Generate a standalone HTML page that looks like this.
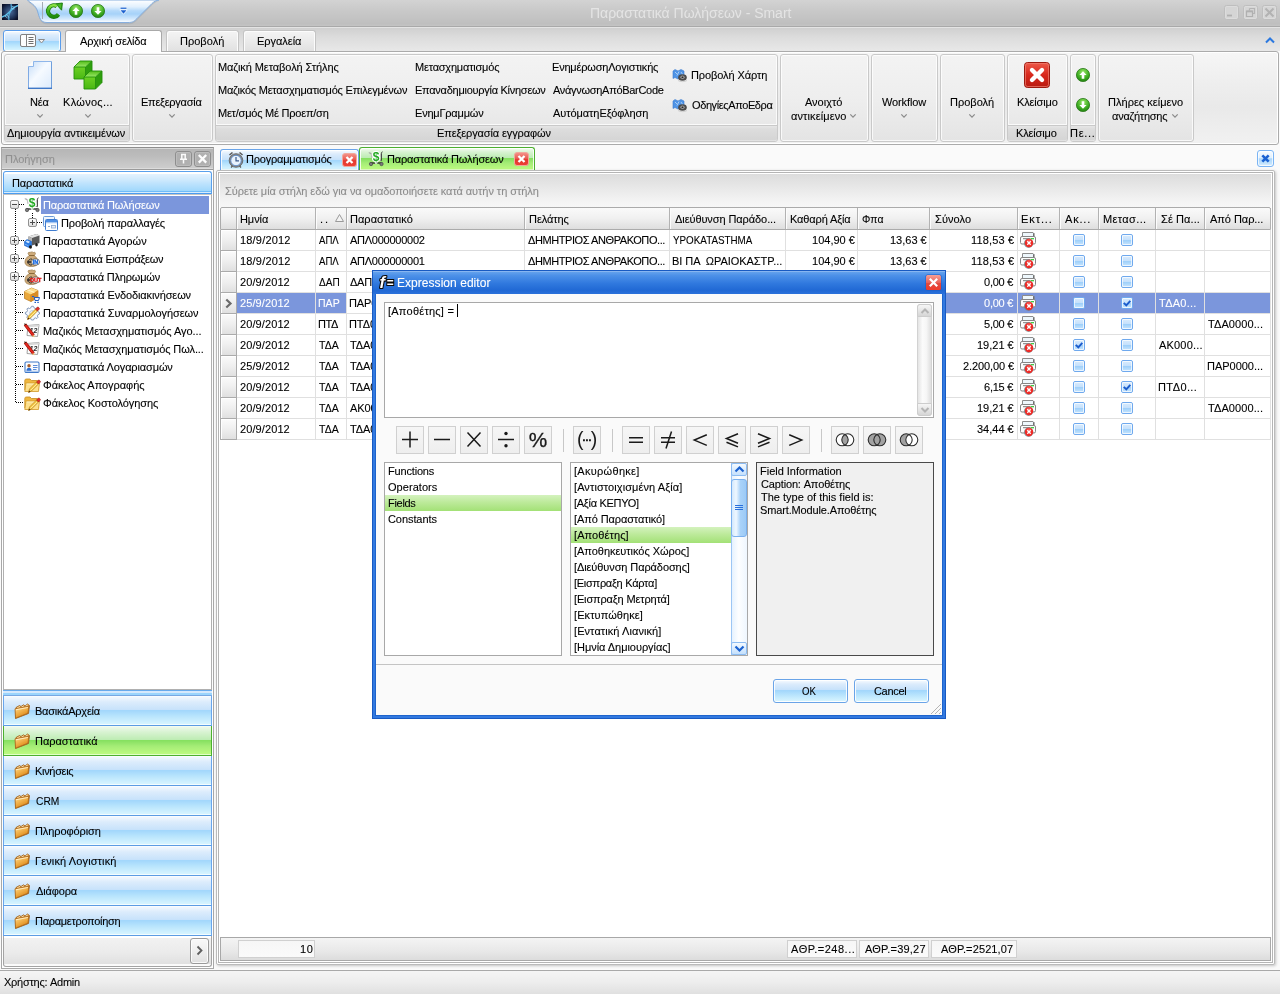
<!DOCTYPE html>
<html lang="el"><head><meta charset="utf-8"><title>Παραστατικά Πωλήσεων - Smart</title>
<style>
html,body{margin:0;padding:0}
body{width:1280px;height:994px;position:relative;overflow:hidden;background:#fafafa;font:11px "Liberation Sans",sans-serif;color:#000}
div,svg{position:absolute;box-sizing:border-box}
svg{overflow:visible}
.t{white-space:nowrap;line-height:13px;height:13px;-webkit-text-stroke:.1px}
</style></head>
<body>
<div style="left:0;top:0;width:1280px;height:994px;will-change:transform">
<div style="left:0px;top:0px;width:1280px;height:26px;background:linear-gradient(#d3d3d3,#c9c9c9 40%,#bfbfbf 92%,#c4c4c4)"></div>
<div style="left:0px;top:26px;width:1280px;height:1px;background:#a9a9a9"></div>
<div style="left:0px;top:27px;width:1280px;height:1px;background:#e4e4e4"></div>
<svg style="left:2px;top:4px;" width="16" height="16" viewBox="0 0 16 16"><defs><radialGradient id="ai" cx=".5" cy=".5" r=".6"><stop offset="0" stop-color="#4a6c9c"/><stop offset=".6" stop-color="#22365c"/><stop offset="1" stop-color="#0a1028"/></radialGradient></defs>
<rect width="16" height="16" fill="url(#ai)"/>
<path d="M0 13 C4 12 6 9.5 8 7.5 S12 2.5 16 1.5" stroke="#5cc0ea" stroke-width="1.5" fill="none"/>
<path d="M9 0 C10 3 9.5 5 8.5 7 S6 12 7 16" stroke="#58b4e0" stroke-width="1.3" fill="none" opacity=".9"/>
<path d="M10 2.5l3 1M9.5 4.5l3 .5M3 12l2.5 2M4.5 10.5l2.5 3" stroke="#8fd4f4" stroke-width=".9" opacity=".9"/></svg>
<svg style="left:26px;top:0px;" width="136" height="26" viewBox="0 0 136 26"><defs><linearGradient id="qg" x1="0" y1="0" x2="0" y2="1">
<stop offset="0" stop-color="#ffffff"/><stop offset=".3" stop-color="#e2f0fd"/><stop offset=".48" stop-color="#b4d9fa"/><stop offset=".62" stop-color="#a6d2f9"/><stop offset=".85" stop-color="#d4e9fd"/><stop offset="1" stop-color="#ffffff"/></linearGradient></defs>
<path d="M1.5 0 C4 3 9.5 4.5 11.5 11 C13.5 18 14.5 23 21 23 L102 23 C107 23 108.5 21.5 111 19 L126 4 C128 2 130 .5 133 0 Z" fill="#9aa4b0" opacity=".45" transform="translate(0 1.2)"/>
<path d="M1.5 0 C4 3 9.5 4.5 11.5 11 C13.5 18 14.5 22.5 21 22.5 L102 22.5 C107 22.5 108.5 21 111 18.5 L126 3.5 C128 1.5 130 .5 133 0 Z" fill="url(#qg)" stroke="#86aede" stroke-width="1"/>
<path d="M16.5 2 V19" stroke="#a4aab4" stroke-width="1"/></svg>
<svg style="left:45px;top:2px;" width="18" height="18" viewBox="0 0 18 18"><defs><linearGradient id="gr1" x1="0" y1="0" x2="0" y2="1"><stop offset="0" stop-color="#8ae244"/><stop offset=".5" stop-color="#3cae1c"/><stop offset="1" stop-color="#1e8a0e"/></linearGradient></defs>
<path d="M13.4 12.4 A5.7 5.7 0 1 1 11.8 4.2" fill="none" stroke="#1a7a0c" stroke-width="4.3"/>
<path d="M10.8 1.8 L17.4 1 L16.6 8.2 Z" fill="#2c9c14" stroke="#1a7a0c" stroke-width=".9" stroke-linejoin="round"/>
<path d="M13.4 12.4 A5.7 5.7 0 1 1 11.8 4.2" fill="none" stroke="url(#gr1)" stroke-width="2.7"/>
<path d="M12.3 2.5 L16.4 2 L15.9 6.5 Z" fill="#48b824"/></svg>
<svg style="left:69px;top:4px;" width="14" height="14" viewBox="0 0 14 14"><defs><radialGradient id="c69_4" cx=".5" cy=".3" r=".8"><stop offset="0" stop-color="#9be86a"/><stop offset=".55" stop-color="#3fae22"/><stop offset="1" stop-color="#17700c"/></radialGradient></defs>
<circle cx="7" cy="7" r="6.6" fill="url(#c69_4)" stroke="#2a7a18" stroke-width=".8"/>
<path d="M7 3.2 L10.6 7 H8.3 V10.8 H5.7 V7 H3.4 Z" fill="#fff"/></svg>
<svg style="left:91px;top:4px;" width="14" height="14" viewBox="0 0 14 14"><defs><radialGradient id="c91_4" cx=".5" cy=".3" r=".8"><stop offset="0" stop-color="#9be86a"/><stop offset=".55" stop-color="#3fae22"/><stop offset="1" stop-color="#17700c"/></radialGradient></defs>
<circle cx="7" cy="7" r="6.6" fill="url(#c91_4)" stroke="#2a7a18" stroke-width=".8"/>
<path d="M7 10.8 L10.6 7 H8.3 V3.2 H5.7 V7 H3.4 Z" fill="#fff"/></svg>
<svg style="left:120px;top:7px;" width="7" height="8" viewBox="0 0 7 8"><path d="M.3 1.2h6.4" stroke="#fff" stroke-width="2.6"/><path d="M.5 3.3h6l-3 3.4z" fill="#1c62d0" stroke="#fff" stroke-width="1.2" paint-order="stroke"/><path d="M.5 1.2h6" stroke="#1c62d0" stroke-width="1.3"/></svg>
<div class="t" style="left:590px;top:5px;letter-spacing:-0.019px;font-size:14px;line-height:17px;height:17px;color:#e4e4e4;-webkit-text-stroke:0;">Παραστατικά Πωλήσεων - Smart</div>
<svg style="left:1224px;top:5px;" width="15" height="15" viewBox="0 0 15 15"><rect x=".5" y=".5" width="14" height="14" rx="2" fill="#d5d5d5" stroke="#bebebe"/><rect x="1.5" y="1.5" width="12" height="12" rx="1.5" fill="none" stroke="#dcdcdc"/><path d="M3 10.5h5" stroke="#b0b0b0" stroke-width="1.8"/></svg>
<svg style="left:1243px;top:5px;" width="15" height="15" viewBox="0 0 15 15"><rect x=".5" y=".5" width="14" height="14" rx="2" fill="#d5d5d5" stroke="#bebebe"/><rect x="1.5" y="1.5" width="12" height="12" rx="1.5" fill="none" stroke="#dcdcdc"/><path d="M6.5 3.5h5v5h-2M6.5 3.5v2" stroke="#b4b4b4" stroke-width="1.2" fill="none"/><path d="M3.5 6h6v5.5h-6z" stroke="#b0b0b0" stroke-width="1.2" fill="none"/><path d="M3.5 6.5h6" stroke="#b0b0b0" stroke-width="1.6"/></svg>
<svg style="left:1262px;top:5px;" width="15" height="15" viewBox="0 0 15 15"><rect x=".5" y=".5" width="14" height="14" rx="2" fill="#d5d5d5" stroke="#bebebe"/><rect x="1.5" y="1.5" width="12" height="12" rx="1.5" fill="none" stroke="#dcdcdc"/><path d="M3.5 3.5l8 8M11.5 3.5l-8 8" stroke="#b2b2b2" stroke-width="2"/></svg>
<div style="left:0px;top:28px;width:1280px;height:23px;background:linear-gradient(#d0d0d0,#dcdcdc 40%,#e8e8e8)"></div>
<div style="left:3px;top:30px;width:58px;height:22px;border:1px solid #5a9cea;border-radius:3px;box-shadow:inset 0 0 0 1px rgba(255,255,255,.85);background:linear-gradient(#ffffff 0,#f2f8fe 1px,#dcecfc 4px,#c9e3fb 9px,#c6e1fb 10px,#a2d6fc 10px,#a4d8fc 11px,#b8e4fd 14px,#d6f4ff 19px,#f2fdff 19px)"></div>
<svg style="left:20px;top:34px;" width="26" height="14" viewBox="0 0 26 14"><rect x=".5" y=".5" width="15" height="12" rx="1.5" fill="#fdfdfd" stroke="#808080"/>
<path d="M6.5 1v11" stroke="#808080"/><path d="M8.5 3.5h5M8.5 5.5h5M8.5 7.5h5M8.5 9.5h5" stroke="#707070" stroke-width="1"/>
<path d="M18.5 5.5h6l-3 3.5z" fill="#f4f4f4" stroke="#8c8c8c" stroke-width="1"/></svg>
<div style="left:65px;top:30px;width:97px;height:23px;border:1px solid #a9a9a9;border-bottom:none;border-radius:3px 3px 0 0;background:#fff"></div>
<div class="t" style="left:80px;top:35px;letter-spacing:-0.167px;">Αρχική σελίδα</div>
<div style="left:166px;top:30px;width:73px;height:21px;border:1px solid #c4c4c4;border-bottom:none;border-radius:3px 3px 0 0;background:linear-gradient(#f4f4f4,#ebebeb 50%,#e1e1e1);box-shadow:inset 1px 1px 0 #fcfcfc,inset -1px 0 0 #fcfcfc"></div>
<div class="t" style="left:180px;top:35px;letter-spacing:0.017px;">Προβολή</div>
<div style="left:243px;top:30px;width:73px;height:21px;border:1px solid #c4c4c4;border-bottom:none;border-radius:3px 3px 0 0;background:linear-gradient(#f4f4f4,#ebebeb 50%,#e1e1e1);box-shadow:inset 1px 1px 0 #fcfcfc,inset -1px 0 0 #fcfcfc"></div>
<div class="t" style="left:257px;top:35px;letter-spacing:-0.028px;">Εργαλεία</div>
<svg style="left:1264px;top:36px;" width="12" height="8" viewBox="0 0 12 8"><path d="M2 6.5l4-4 4 4" stroke="#2a78e0" stroke-width="2" fill="none"/></svg>
<div style="left:1px;top:51px;width:1278px;height:94px;background:linear-gradient(#f6f6f6,#eeeeee 35%,#e9e9e9 60%,#f1f1f1);border:1px solid #ababab;border-radius:3px;box-shadow:inset 0 0 0 1px #fff"></div>
<div style="left:66px;top:51px;width:95px;height:1px;background:#fff"></div>
<div style="left:4px;top:54px;width:126px;height:88px;background:linear-gradient(#f3f3f3,#eeeeee 50%,#e4e4e4);border:1px solid #c9c9c9;border-radius:3px;box-shadow:inset 0 0 0 1px rgba(255,255,255,.75)"></div>
<div style="left:5px;top:124px;width:124px;height:1px;background:#fafafa"></div>
<div style="left:5px;top:125px;width:124px;height:16px;background:linear-gradient(#e6e6e6,#dddddd 20%,#d5d5d5 93%,#e2e2e2 94%);border-top:1px solid #c9c9c9;border-radius:0 0 2px 2px"></div>
<div class="t" style="left:7px;top:127px;letter-spacing:-0.091px;">Δημιουργία αντικειμένων</div>
<svg style="left:28px;top:61px;" width="24" height="28" viewBox="0 0 24 28"><defs><linearGradient id="nd" x1="0" y1="0" x2="1" y2="1"><stop offset="0" stop-color="#c4dcf8"/><stop offset=".45" stop-color="#f6faff"/><stop offset="1" stop-color="#dcebfc"/></linearGradient></defs>
<path d="M5.5 .5H23.5V27.5H.5V5.5H5.5Z" fill="url(#nd)"/>
<path d="M5.5 .5H23.5" stroke="#8fb6ea" fill="none"/><path d="M.5 5.5V27" stroke="#7faae4" fill="none"/><path d="M23.5 .5V27" stroke="#6f9fdc" fill="none"/><path d="M0 27.3H24" stroke="#3f78c8" stroke-width="1.4" fill="none"/>
<path d="M.5 5.5H5.5V.5" fill="none" stroke="#8fb6ea"/><path d="M0 5L5 0V5Z" fill="#fbfbfb"/></svg>
<svg style="left:74px;top:61px;" width="28" height="28" viewBox="0 0 28 28"><defs><linearGradient id="cf0" x1="0" y1="0" x2="0" y2="1"><stop offset="0" stop-color="#6cd024"/><stop offset="1" stop-color="#4ab814"/></linearGradient>
<linearGradient id="ct0" x1="0" y1="0" x2="0" y2="1"><stop offset="0" stop-color="#52bc18"/><stop offset="1" stop-color="#9ae868"/></linearGradient>
<linearGradient id="cf1" x1="0" y1="0" x2="0" y2="1"><stop offset="0" stop-color="#6cd024"/><stop offset="1" stop-color="#4ab814"/></linearGradient>
<linearGradient id="ct1" x1="0" y1="0" x2="0" y2="1"><stop offset="0" stop-color="#52bc18"/><stop offset="1" stop-color="#9ae868"/></linearGradient></defs><g transform="translate(0 0)"><path d="M0 6H11.5V18H0Z" fill="url(#cf0)"/><path d="M0 6L6 0H18L11.5 6Z" fill="url(#ct0)"/><path d="M11.5 6L18 0V11.5L11.5 18Z" fill="#2f9e0e"/>
<path d="M0 6H11.5V18H0ZM0 6L6 0H18L11.5 6M18 0V11.5L11.5 18" fill="none" stroke="#23900a" stroke-width=".9"/></g><g transform="translate(10 10)"><path d="M0 6H11.5V18H0Z" fill="url(#cf1)"/><path d="M0 6L6 0H18L11.5 6Z" fill="url(#ct1)"/><path d="M11.5 6L18 0V11.5L11.5 18Z" fill="#2f9e0e"/>
<path d="M0 6H11.5V18H0ZM0 6L6 0H18L11.5 6M18 0V11.5L11.5 18" fill="none" stroke="#23900a" stroke-width=".9"/></g></svg>
<div class="t" style="left:30px;top:96px;letter-spacing:-0.15px;">Νέα</div>
<svg style="left:35.5px;top:112.5px;" width="8" height="6" viewBox="0 0 8 6"><path d="M1.3 1.3l2.7 2.9 2.7-2.9" stroke="#8a8a8a" stroke-width="1.2" fill="none"/></svg>
<div class="t" style="left:63px;top:96px;letter-spacing:0.289px;">Κλώνος...</div>
<svg style="left:83.5px;top:112.5px;" width="8" height="6" viewBox="0 0 8 6"><path d="M1.3 1.3l2.7 2.9 2.7-2.9" stroke="#8a8a8a" stroke-width="1.2" fill="none"/></svg>
<div style="left:132px;top:54px;width:81px;height:88px;background:linear-gradient(#f3f3f3,#eeeeee 50%,#e4e4e4);border:1px solid #c9c9c9;border-radius:3px;box-shadow:inset 0 0 0 1px rgba(255,255,255,.75)"></div>
<div class="t" style="left:141px;top:96px;letter-spacing:-0.26px;">Επεξεργασία</div>
<svg style="left:167.5px;top:112.5px;" width="8" height="6" viewBox="0 0 8 6"><path d="M1.3 1.3l2.7 2.9 2.7-2.9" stroke="#8a8a8a" stroke-width="1.2" fill="none"/></svg>
<div style="left:215px;top:54px;width:563px;height:88px;background:linear-gradient(#f3f3f3,#eeeeee 50%,#e4e4e4);border:1px solid #c9c9c9;border-radius:3px;box-shadow:inset 0 0 0 1px rgba(255,255,255,.75)"></div>
<div style="left:216px;top:124px;width:561px;height:1px;background:#fafafa"></div>
<div style="left:216px;top:125px;width:561px;height:16px;background:linear-gradient(#e6e6e6,#dddddd 20%,#d5d5d5 93%,#e2e2e2 94%);border-top:1px solid #c9c9c9;border-radius:0 0 2px 2px"></div>
<div class="t" style="left:437px;top:127px;letter-spacing:-0.115px;">Επεξεργασία εγγραφών</div>
<div class="t" style="left:218px;top:61px;letter-spacing:-0.077px;">Μαζική Μεταβολή Στήλης</div>
<div class="t" style="left:218px;top:84px;letter-spacing:-0.221px;">Μαζικός Μετασχηματισμός Επιλεγμένων</div>
<div class="t" style="left:218px;top:107px;letter-spacing:-0.221px;">Μετ/σμός Μέ Προεπ/ση</div>
<div class="t" style="left:415px;top:61px;letter-spacing:-0.206px;">Μετασχηματισμός</div>
<div class="t" style="left:415px;top:84px;letter-spacing:-0.265px;">Επαναδημιουργία Κίνησεων</div>
<div class="t" style="left:415px;top:107px;letter-spacing:-0.21px;">ΕνημΓραμμών</div>
<div class="t" style="left:552px;top:61px;letter-spacing:-0.194px;">ΕνημέρωσηΛογιστικής</div>
<div class="t" style="left:553px;top:84px;letter-spacing:-0.299px;">ΑνάγνωσηΑπόBarCode</div>
<div class="t" style="left:553px;top:107px;letter-spacing:-0.074px;">ΑυτόματηΕξόφληση</div>
<svg style="left:672px;top:68px;" width="16" height="14" viewBox="0 0 16 14"><path d="M1 3l2-1.5 3 1.5 3-1.5 3 1.5v8l-3-1.5-3 1.5-3-1.5-2 1z" fill="#4f94e6" stroke="#3a7bd0" stroke-width=".6"/>
<path d="M3 4l2 2M7 3.5l-2 4M9 4l2 3" stroke="#bcd8f8" stroke-width=".8"/>
<ellipse cx="10.5" cy="9.5" rx="4.3" ry="3.3" fill="#4a4a4a"/><ellipse cx="10.5" cy="9.3" rx="2.2" ry="1.7" fill="#9a9a9a"/><ellipse cx="10.5" cy="9.3" rx="1" ry=".8" fill="#1e1e1e"/>
<path d="M6 12.5c2 1.5 7 1.5 9 0" stroke="#c8c8c8" stroke-width=".8" fill="none"/></svg>
<div class="t" style="left:691px;top:69px;letter-spacing:-0.1px;">Προβολή Χάρτη</div>
<svg style="left:672px;top:98px;" width="16" height="14" viewBox="0 0 16 14"><path d="M1 3l2-1.5 3 1.5 3-1.5 3 1.5v8l-3-1.5-3 1.5-3-1.5-2 1z" fill="#4f94e6" stroke="#3a7bd0" stroke-width=".6"/>
<path d="M3 4l2 2M7 3.5l-2 4M9 4l2 3" stroke="#bcd8f8" stroke-width=".8"/>
<ellipse cx="10.5" cy="9.5" rx="4.3" ry="3.3" fill="#4a4a4a"/><ellipse cx="10.5" cy="9.3" rx="2.2" ry="1.7" fill="#9a9a9a"/><ellipse cx="10.5" cy="9.3" rx="1" ry=".8" fill="#1e1e1e"/>
<path d="M6 12.5c2 1.5 7 1.5 9 0" stroke="#c8c8c8" stroke-width=".8" fill="none"/></svg>
<div class="t" style="left:692px;top:99px;letter-spacing:-0.393px;">ΟδηγίεςΑποΕδρα</div>
<div style="left:780px;top:54px;width:89px;height:88px;background:linear-gradient(#f3f3f3,#eeeeee 50%,#e4e4e4);border:1px solid #c9c9c9;border-radius:3px;box-shadow:inset 0 0 0 1px rgba(255,255,255,.75)"></div>
<div class="t" style="left:805px;top:96px;letter-spacing:-0.017px;">Ανοιχτό</div>
<div class="t" style="left:791px;top:110px;letter-spacing:0.11px;">αντικείμενο</div>
<svg style="left:848.5px;top:112.5px;" width="8" height="6" viewBox="0 0 8 6"><path d="M1.3 1.3l2.7 2.9 2.7-2.9" stroke="#8a8a8a" stroke-width="1.2" fill="none"/></svg>
<div style="left:871px;top:54px;width:67px;height:88px;background:linear-gradient(#f3f3f3,#eeeeee 50%,#e4e4e4);border:1px solid #c9c9c9;border-radius:3px;box-shadow:inset 0 0 0 1px rgba(255,255,255,.75)"></div>
<div class="t" style="left:882px;top:96px;letter-spacing:-0.115px;">Workflow</div>
<svg style="left:899.5px;top:112.5px;" width="8" height="6" viewBox="0 0 8 6"><path d="M1.3 1.3l2.7 2.9 2.7-2.9" stroke="#8a8a8a" stroke-width="1.2" fill="none"/></svg>
<div style="left:940px;top:54px;width:65px;height:88px;background:linear-gradient(#f3f3f3,#eeeeee 50%,#e4e4e4);border:1px solid #c9c9c9;border-radius:3px;box-shadow:inset 0 0 0 1px rgba(255,255,255,.75)"></div>
<div class="t" style="left:950px;top:96px;">Προβολή</div>
<svg style="left:968px;top:112.5px;" width="8" height="6" viewBox="0 0 8 6"><path d="M1.3 1.3l2.7 2.9 2.7-2.9" stroke="#8a8a8a" stroke-width="1.2" fill="none"/></svg>
<div style="left:1007px;top:54px;width:61px;height:88px;background:linear-gradient(#f3f3f3,#eeeeee 50%,#e4e4e4);border:1px solid #c9c9c9;border-radius:3px;box-shadow:inset 0 0 0 1px rgba(255,255,255,.75)"></div>
<div style="left:1008px;top:124px;width:59px;height:1px;background:#fafafa"></div>
<div style="left:1008px;top:125px;width:59px;height:16px;background:linear-gradient(#e6e6e6,#dddddd 20%,#d5d5d5 93%,#e2e2e2 94%);border-top:1px solid #c9c9c9;border-radius:0 0 2px 2px"></div>
<div class="t" style="left:1016px;top:127px;letter-spacing:-0.143px;">Κλείσιμο</div>
<svg style="left:1024px;top:62px;" width="26" height="26" viewBox="0 0 26 26"><defs><linearGradient id="rx" x1="0" y1="0" x2="0" y2="1"><stop offset="0" stop-color="#ee5a4a"/><stop offset=".5" stop-color="#d8281c"/><stop offset="1" stop-color="#b81a10"/></linearGradient></defs>
<rect x=".5" y=".5" width="25" height="25" rx="3" fill="url(#rx)" stroke="#9c1a10" stroke-width="1"/><rect x="1.5" y="1.5" width="23" height="23" rx="2" fill="none" stroke="#f08070" stroke-width="1" opacity=".7"/>
<path d="M8 8l10 10M18 8l-10 10" stroke="#fff" stroke-width="4.4" stroke-linecap="round"/></svg>
<div class="t" style="left:1017px;top:96px;letter-spacing:-0.143px;">Κλείσιμο</div>
<div style="left:1070px;top:54px;width:26px;height:88px;background:linear-gradient(#f3f3f3,#eeeeee 50%,#e4e4e4);border:1px solid #c9c9c9;border-radius:3px;box-shadow:inset 0 0 0 1px rgba(255,255,255,.75)"></div>
<div style="left:1071px;top:124px;width:24px;height:1px;background:#fafafa"></div>
<div style="left:1071px;top:125px;width:24px;height:16px;background:linear-gradient(#e6e6e6,#dddddd 20%,#d5d5d5 93%,#e2e2e2 94%);border-top:1px solid #c9c9c9;border-radius:0 0 2px 2px"></div>
<div class="t" style="left:1070px;top:127px;letter-spacing:0.7px;">Πε...</div>
<svg style="left:1076px;top:68px;" width="14" height="14" viewBox="0 0 14 14"><defs><radialGradient id="d1076_68" cx=".5" cy=".3" r=".8"><stop offset="0" stop-color="#9be86a"/><stop offset=".55" stop-color="#3fae22"/><stop offset="1" stop-color="#17700c"/></radialGradient></defs>
<circle cx="7" cy="7" r="6.6" fill="url(#d1076_68)" stroke="#2a7a18" stroke-width=".8"/>
<path d="M7 3.2 L10.6 7 H8.3 V10.8 H5.7 V7 H3.4 Z" fill="#fff"/></svg>
<svg style="left:1076px;top:98px;" width="14" height="14" viewBox="0 0 14 14"><defs><radialGradient id="d1076_98" cx=".5" cy=".3" r=".8"><stop offset="0" stop-color="#9be86a"/><stop offset=".55" stop-color="#3fae22"/><stop offset="1" stop-color="#17700c"/></radialGradient></defs>
<circle cx="7" cy="7" r="6.6" fill="url(#d1076_98)" stroke="#2a7a18" stroke-width=".8"/>
<path d="M7 10.8 L10.6 7 H8.3 V3.2 H5.7 V7 H3.4 Z" fill="#fff"/></svg>
<div style="left:1098px;top:54px;width:96px;height:88px;background:linear-gradient(#f3f3f3,#eeeeee 50%,#e4e4e4);border:1px solid #c9c9c9;border-radius:3px;box-shadow:inset 0 0 0 1px rgba(255,255,255,.75)"></div>
<div class="t" style="left:1108px;top:96px;letter-spacing:0.024px;">Πλήρες κείμενο</div>
<div class="t" style="left:1112px;top:110px;letter-spacing:-0.234px;">αναζήτησης</div>
<svg style="left:1170.5px;top:112.5px;" width="8" height="6" viewBox="0 0 8 6"><path d="M1.3 1.3l2.7 2.9 2.7-2.9" stroke="#8a8a8a" stroke-width="1.2" fill="none"/></svg>
<div style="left:1px;top:147px;width:213px;height:822px;background:#fff;border:1px solid #a8a8a8;border-top-color:#8e8e8e"></div>
<div style="left:2px;top:148px;width:211px;height:22px;background:linear-gradient(#d8d8d8 0 1px,#b6b6b6 1px,#bcbcbc 8px,#cdcdcd 20px,#dcdcdc 20px);border-bottom:1px solid #9a9a9a"></div>
<div class="t" style="left:5px;top:153px;letter-spacing:-0.042px;color:#919191;">Πλοήγηση</div>
<svg style="left:175px;top:151px;" width="17" height="16" viewBox="0 0 17 16"><rect x=".5" y=".5" width="16" height="15" rx="2.5" fill="#b0b0b0" stroke="#8e8e8e"/><rect x="1.5" y="1.5" width="14" height="13" rx="1.5" fill="none" stroke="#bcbcbc"/><g transform="translate(.5 0)"><path d="M5.5 3.5h5M6.3 3.5v5M9.7 3.5v5M4.5 8.3h7M8 8.5v4" stroke="#fafafa" stroke-width="1.5" fill="none"/></g></svg>
<svg style="left:194px;top:151px;" width="17" height="16" viewBox="0 0 17 16"><rect x=".5" y=".5" width="16" height="15" rx="2.5" fill="#b0b0b0" stroke="#8e8e8e"/><rect x="1.5" y="1.5" width="14" height="13" rx="1.5" fill="none" stroke="#bcbcbc"/><g transform="translate(.5 0)"><path d="M4.3 4l7.4 7.6M11.7 4l-7.4 7.6" stroke="#fcfcfc" stroke-width="2.3"/></g></svg>
<div style="left:3px;top:171px;width:209px;height:23px;border:1px solid #5aa0ec;border-bottom-color:#4a9cf0;border-radius:3px 3px 0 0;background:linear-gradient(#fff 0 2px,#e4f2fe 2px,#d2ebfd 7px,#bce2fd 12px,#a0d8fc 19px,#70bcf8 19px 20px,#d8ecfc 20px)"></div>
<div class="t" style="left:12px;top:177px;letter-spacing:-0.14px;">Παραστατικά</div>
<div style="left:3px;top:194px;width:209px;height:496px;background:#fff;border:1px solid #b0b0b0;border-top-color:#c4c4c4"></div>
<div style="left:15px;top:209px;width:1px;height:194px;background:repeating-linear-gradient(#000 0 1px,transparent 1px 2px)"></div>
<div style="left:32px;top:213px;width:1px;height:5px;background:repeating-linear-gradient(#000 0 1px,transparent 1px 2px)"></div>
<div style="left:41px;top:196px;width:168px;height:18px;background:#7b96dc"></div>
<div style="left:19px;top:204px;width:5px;height:1px;background:repeating-linear-gradient(90deg,#000 0 1px,transparent 1px 2px)"></div>
<svg style="left:10px;top:200px;" width="9" height="9" viewBox="0 0 9 9"><defs><linearGradient id="pb" x1="0" y1="0" x2="0" y2="1"><stop offset="0" stop-color="#ffffff"/><stop offset="1" stop-color="#dcdcdc"/></linearGradient></defs><rect x=".5" y=".5" width="8" height="8" rx="1.5" fill="url(#pb)" stroke="#919191"/><g stroke="#4c4c4c" stroke-width="1"><path d="M2 4.5h5"/></g></svg>
<svg style="left:24px;top:197px;" width="16" height="16" viewBox="0 0 16 16"><path d="M.8 1.8L3 2.3 5 9.5H13" fill="none" stroke="#9a9a9a" stroke-width="1"/><path d="M3.2 3.2H12.5L12 9H5Z" fill="#ececec" stroke="#c4c4c4" stroke-width=".6"/>
<path d="M14.5 .8C13.5 1 13.4 2 13.4 3V9.8" fill="none" stroke="#3a3a3a" stroke-width="1"/>
<path d="M2.5 12H14" stroke="#1e1e1e" stroke-width="1.3"/><circle cx="3" cy="13" r="1.7" fill="#7a7a7a" stroke="#3a3a3a" stroke-width=".6"/><circle cx="13.5" cy="13" r="1.7" fill="#7a7a7a" stroke="#3a3a3a" stroke-width=".6"/>
<text x="8.2" y="10" font-family="Liberation Sans,sans-serif" font-weight="bold" font-size="12" text-anchor="middle" fill="#22aa22" stroke="#fff" stroke-width="2" stroke-linejoin="round" paint-order="stroke">$</text></svg>
<div class="t" style="left:43px;top:199px;letter-spacing:-0.148px;color:#fff;">Παραστατικά Πωλήσεων</div>
<div style="left:37px;top:222px;width:5px;height:1px;background:repeating-linear-gradient(90deg,#000 0 1px,transparent 1px 2px)"></div>
<svg style="left:28px;top:218px;" width="9" height="9" viewBox="0 0 9 9"><defs><linearGradient id="pb" x1="0" y1="0" x2="0" y2="1"><stop offset="0" stop-color="#ffffff"/><stop offset="1" stop-color="#dcdcdc"/></linearGradient></defs><rect x=".5" y=".5" width="8" height="8" rx="1.5" fill="url(#pb)" stroke="#919191"/><g stroke="#4c4c4c" stroke-width="1"><path d="M2 4.5h5"/><path d="M4.5 2v5"/></g></svg>
<svg style="left:42px;top:215px;" width="16" height="16" viewBox="0 0 16 16"><rect x="1.5" y="1.5" width="11" height="10" rx="1" fill="#f0f6fe" stroke="#6a9ad8"/>
<rect x="3.5" y="4.5" width="12" height="11" rx="1" fill="#fdfeff" stroke="#3f7cd0"/><rect x="4" y="5" width="11" height="2.5" fill="#4f8fe4"/><path d="M4 7.8H15" stroke="#a8c8f0" stroke-width=".8"/>
<path d="M6 11.5h2" stroke="#8aa8d0" stroke-width="1"/><rect x="9.5" y="10.5" width="4" height="2.5" fill="#e4ecf8" stroke="#8aa8d0" stroke-width=".8"/></svg>
<div class="t" style="left:61px;top:217px;letter-spacing:-0.141px;">Προβολή παραλλαγές</div>
<div style="left:19px;top:240px;width:5px;height:1px;background:repeating-linear-gradient(90deg,#000 0 1px,transparent 1px 2px)"></div>
<svg style="left:10px;top:236px;" width="9" height="9" viewBox="0 0 9 9"><defs><linearGradient id="pb" x1="0" y1="0" x2="0" y2="1"><stop offset="0" stop-color="#ffffff"/><stop offset="1" stop-color="#dcdcdc"/></linearGradient></defs><rect x=".5" y=".5" width="8" height="8" rx="1.5" fill="url(#pb)" stroke="#919191"/><g stroke="#4c4c4c" stroke-width="1"><path d="M2 4.5h5"/><path d="M4.5 2v5"/></g></svg>
<svg style="left:24px;top:233px;" width="16" height="16" viewBox="0 0 16 16"><path d="M4.5 3.5L12.5 1 15.5 2.5V10L8 12.5 4.5 10.5Z" fill="#5a5a5a"/><path d="M4.5 3.5L12.5 1 15.5 2.5 8 5Z" fill="#e4e4e4"/><path d="M4.5 3.5L8 5V12.5L4.5 10.5Z" fill="#b8b8b8"/>
<path d="M.5 8.5L3 6.5 7.5 8.5V13L5 14.5 .5 12.5Z" fill="#2a7ce4" stroke="#1a5cc0" stroke-width=".6"/><path d="M1.5 8.8L3.2 7.5 6 8.8 4.5 10.2Z" fill="#d4e8ff"/><path d="M.8 11L4.5 12.8" stroke="#8cc0ff" stroke-width=".8"/>
<ellipse cx="6.5" cy="14" rx="1.5" ry="1.8" fill="#1a1a1a"/><ellipse cx="12.5" cy="11.8" rx="1.3" ry="1.7" fill="#1a1a1a"/></svg>
<div class="t" style="left:43px;top:235px;letter-spacing:-0.041px;">Παραστατικά Αγορών</div>
<div style="left:19px;top:258px;width:5px;height:1px;background:repeating-linear-gradient(90deg,#000 0 1px,transparent 1px 2px)"></div>
<svg style="left:10px;top:254px;" width="9" height="9" viewBox="0 0 9 9"><defs><linearGradient id="pb" x1="0" y1="0" x2="0" y2="1"><stop offset="0" stop-color="#ffffff"/><stop offset="1" stop-color="#dcdcdc"/></linearGradient></defs><rect x=".5" y=".5" width="8" height="8" rx="1.5" fill="url(#pb)" stroke="#919191"/><g stroke="#4c4c4c" stroke-width="1"><path d="M2 4.5h5"/><path d="M4.5 2v5"/></g></svg>
<svg style="left:24px;top:251px;" width="16" height="16" viewBox="0 0 16 16"><path d="M4.5 3.5C3.5 2 4.5 .8 6 1.5 7 .8 8.5 .8 9.5 1.5 11 .8 12 2 11 3.5L10 4.5C12.5 6 14 8.5 14 11 14 14 11.5 15.5 7.5 15.5S1 14 1 11C1 8.5 2.5 6 5.5 4.5Z" fill="#cdaa7a" stroke="#9a7848" stroke-width=".7"/>
<path d="M5 4.5H10.5" stroke="#8a6838" stroke-width="1"/><path d="M3.5 9.5C4.5 8 6 7.5 7 8" stroke="#e8d4b0" stroke-width="1" fill="none"/>
<path d="M8 8.2A3 3 0 1 0 8 13.8M3.2 10.3H7M3.2 11.7H7" fill="none" stroke="#2a2a2a" stroke-width="1"/>
<rect x="7.5" y="8" width="8" height="6" rx="3" fill="#fff" stroke="#3a3a3a" stroke-width=".7"/>
<text x="11.5" y="13" font-family="Liberation Sans,sans-serif" font-weight="bold" font-size="5.5" text-anchor="middle" fill="#1a6ae0" stroke="#1a6ae0" stroke-width=".4">IN</text></svg>
<div class="t" style="left:43px;top:253px;letter-spacing:-0.286px;">Παραστατικά Εισπράξεων</div>
<div style="left:19px;top:276px;width:5px;height:1px;background:repeating-linear-gradient(90deg,#000 0 1px,transparent 1px 2px)"></div>
<svg style="left:10px;top:272px;" width="9" height="9" viewBox="0 0 9 9"><defs><linearGradient id="pb" x1="0" y1="0" x2="0" y2="1"><stop offset="0" stop-color="#ffffff"/><stop offset="1" stop-color="#dcdcdc"/></linearGradient></defs><rect x=".5" y=".5" width="8" height="8" rx="1.5" fill="url(#pb)" stroke="#919191"/><g stroke="#4c4c4c" stroke-width="1"><path d="M2 4.5h5"/><path d="M4.5 2v5"/></g></svg>
<svg style="left:24px;top:269px;" width="16" height="16" viewBox="0 0 16 16"><path d="M4.5 3.5C3.5 2 4.5 .8 6 1.5 7 .8 8.5 .8 9.5 1.5 11 .8 12 2 11 3.5L10 4.5C12.5 6 14 8.5 14 11 14 14 11.5 15.5 7.5 15.5S1 14 1 11C1 8.5 2.5 6 5.5 4.5Z" fill="#cdaa7a" stroke="#9a7848" stroke-width=".7"/>
<path d="M5 4.5H10.5" stroke="#8a6838" stroke-width="1"/><path d="M3.5 9.5C4.5 8 6 7.5 7 8" stroke="#e8d4b0" stroke-width="1" fill="none"/>
<path d="M8 8.2A3 3 0 1 0 8 13.8M3.2 10.3H7M3.2 11.7H7" fill="none" stroke="#2a2a2a" stroke-width="1"/>
<rect x="7.5" y="8" width="8" height="6" rx="3" fill="#fff" stroke="#3a3a3a" stroke-width=".7"/>
<text x="11.5" y="13" font-family="Liberation Sans,sans-serif" font-weight="bold" font-size="5.5" text-anchor="middle" fill="#e01818" stroke="#e01818" stroke-width=".4">OUT</text></svg>
<div class="t" style="left:43px;top:271px;letter-spacing:-0.178px;">Παραστατικά Πληρωμών</div>
<div style="left:16px;top:294px;width:8px;height:1px;background:repeating-linear-gradient(90deg,#000 0 1px,transparent 1px 2px)"></div>
<svg style="left:24px;top:287px;" width="16" height="16" viewBox="0 0 16 16"><path d="M.5 4.5L7.5 1 14 3.5V10.5L7 14.5 .5 11.5Z" fill="#eaa83c" stroke="#b47418" stroke-width=".7"/><path d="M.5 4.5L7.5 1 14 3.5 7 7.5Z" fill="#fbdc8c"/><path d="M7 7.5V14.5" stroke="#b47418" stroke-width=".7"/><path d="M7 7.5L14 3.5V10.5L7 14.5Z" fill="#d88c24"/>
<path d="M3.5 2.8L10.5 5.5" stroke="#fff4c8" stroke-width="1.2"/>
<path d="M8 9.5H10L11 13.5H14.5L15.5 10.5H10.3" fill="#eaf2ff" stroke="#1e5cc0" stroke-width="1"/><rect x="10.5" y="14.8" width="1.5" height="1.2" fill="#1e5cc0"/><rect x="13.3" y="14.8" width="1.5" height="1.2" fill="#1e5cc0"/></svg>
<div class="t" style="left:43px;top:289px;letter-spacing:-0.118px;">Παραστατικά Ενδοδιακινήσεων</div>
<div style="left:16px;top:312px;width:8px;height:1px;background:repeating-linear-gradient(90deg,#000 0 1px,transparent 1px 2px)"></div>
<svg style="left:24px;top:305px;" width="16" height="16" viewBox="0 0 16 16"><path d="M8 1.2l1.5.2.6 1.5 1.3.6 1.5-.6 1.1 1.1-.6 1.5.6 1.3 1.5.6v1.6l-1.5.6-.6 1.3.6 1.5-1.1 1.1-1.5-.6-1.3.6-.6 1.5H7.4l-.6-1.5-1.3-.6-1.5.6-1.1-1.1.6-1.5-.6-1.3-1.5-.6V7.4l1.5-.6.6-1.3-.6-1.5 1.1-1.1 1.5.6 1.3-.6.6-1.5Z" fill="#f6f9fd" stroke="#7890b4" stroke-width=".9" stroke-linejoin="round"/><circle cx="8" cy="8" r="2.3" fill="#fff" stroke="#9ab0cc" stroke-width=".7"/><g transform="translate(0 0)"><path d="M3.5 14.5L4.5 11 11.5 4 13.5 6 6.5 13Z" fill="#f8cc48" stroke="#b8821c" stroke-width=".7"/><path d="M5.5 12.5L12 6" stroke="#fff0b0" stroke-width=".8"/><path d="M11.5 4L13 2.5a1.2 1.2 0 0 1 1.7 0l.3 .3a1.2 1.2 0 0 1 0 1.7L13.5 6Z" fill="#e03028" stroke="#a01810" stroke-width=".6"/><path d="M3.5 14.5L4.1 12.4 5.6 13.9Z" fill="#4a2c10"/></g></svg>
<div class="t" style="left:43px;top:307px;letter-spacing:-0.092px;">Παραστατικά Συναρμολογήσεων</div>
<div style="left:16px;top:330px;width:8px;height:1px;background:repeating-linear-gradient(90deg,#000 0 1px,transparent 1px 2px)"></div>
<svg style="left:24px;top:323px;" width="16" height="16" viewBox="0 0 16 16"><path d="M4 2.5L15 1.5 13.5 13.5 3 12.5Z" fill="#fcfcfc" stroke="#8c8c8c" stroke-width=".8"/><path d="M4 2.5L15 1.5 14.7 3.5 3.8 4.3Z" fill="#d8d8d8"/>
<text x="9.5" y="9.5" font-family="Liberation Sans,sans-serif" font-style="italic" font-weight="bold" font-size="7" text-anchor="middle" fill="#2a2a2a">12</text>
<path d="M1 1.5L9.5 12.5" stroke="#a01008" stroke-width="3"/><path d="M1 1.5L9.5 12.5" stroke="#e42820" stroke-width="1.9"/><path d="M.2 .3L2.5 1.2 .9 2.5Z" fill="#3a1a10"/><path d="M9 11.8L11 14.3 8.3 13.2Z" fill="#f4c060"/></svg>
<div class="t" style="left:43px;top:325px;letter-spacing:-0.055px;">Μαζικός Μετασχηματισμός Αγο...</div>
<div style="left:16px;top:348px;width:8px;height:1px;background:repeating-linear-gradient(90deg,#000 0 1px,transparent 1px 2px)"></div>
<svg style="left:24px;top:341px;" width="16" height="16" viewBox="0 0 16 16"><path d="M4 2.5L15 1.5 13.5 13.5 3 12.5Z" fill="#fcfcfc" stroke="#8c8c8c" stroke-width=".8"/><path d="M4 2.5L15 1.5 14.7 3.5 3.8 4.3Z" fill="#d8d8d8"/>
<text x="9.5" y="9.5" font-family="Liberation Sans,sans-serif" font-style="italic" font-weight="bold" font-size="7" text-anchor="middle" fill="#2a2a2a">12</text>
<path d="M1 1.5L9.5 12.5" stroke="#a01008" stroke-width="3"/><path d="M1 1.5L9.5 12.5" stroke="#e42820" stroke-width="1.9"/><path d="M.2 .3L2.5 1.2 .9 2.5Z" fill="#3a1a10"/><path d="M9 11.8L11 14.3 8.3 13.2Z" fill="#f4c060"/></svg>
<div class="t" style="left:43px;top:343px;letter-spacing:-0.103px;">Μαζικός Μετασχηματισμός Πωλ...</div>
<div style="left:16px;top:366px;width:8px;height:1px;background:repeating-linear-gradient(90deg,#000 0 1px,transparent 1px 2px)"></div>
<svg style="left:24px;top:359px;" width="16" height="16" viewBox="0 0 16 16"><rect x="1" y="3" width="14" height="10.5" rx="1.2" fill="#fafcff" stroke="#3f78c8" stroke-width="1.1"/><path d="M1.5 12.3H14.5" stroke="#a8c4ec" stroke-width="1.2"/>
<circle cx="5" cy="6.8" r="1.7" fill="#a85c28"/><path d="M2.5 11.8C2.5 9.5 3.5 8.8 5 8.8S7.5 9.5 7.5 11.8Z" fill="#2a6cd0"/>
<path d="M9 6.5H13.5M9 8.5H13.5M9 10.5H12.5" stroke="#5a8cd8" stroke-width="1"/></svg>
<div class="t" style="left:43px;top:361px;letter-spacing:-0.136px;">Παραστατικά Λογαριασμών</div>
<div style="left:16px;top:384px;width:8px;height:1px;background:repeating-linear-gradient(90deg,#000 0 1px,transparent 1px 2px)"></div>
<svg style="left:24px;top:377px;" width="16" height="16" viewBox="0 0 16 16"><path d="M.8 3.5C.8 2.5 1.5 2 2.5 2H6L7.5 3.5H13C14 3.5 14.5 4 14.5 5V13H.8Z" fill="#f0b840" stroke="#c88a1c" stroke-width=".8"/>
<path d="M2 6H15.5L14.5 14.5H.8Z" fill="#fde08c" stroke="#d09828" stroke-width=".8"/><path d="M2.5 7H14.5" stroke="#fff4c8" stroke-width=".8"/><g transform="translate(1 1)"><path d="M3.5 14.5L4.5 11 11.5 4 13.5 6 6.5 13Z" fill="#f8cc48" stroke="#b8821c" stroke-width=".7"/><path d="M5.5 12.5L12 6" stroke="#fff0b0" stroke-width=".8"/><path d="M11.5 4L13 2.5a1.2 1.2 0 0 1 1.7 0l.3 .3a1.2 1.2 0 0 1 0 1.7L13.5 6Z" fill="#e03028" stroke="#a01810" stroke-width=".6"/><path d="M3.5 14.5L4.1 12.4 5.6 13.9Z" fill="#4a2c10"/></g></svg>
<div class="t" style="left:43px;top:379px;letter-spacing:-0.049px;">Φάκελος Απογραφής</div>
<div style="left:16px;top:402px;width:8px;height:1px;background:repeating-linear-gradient(90deg,#000 0 1px,transparent 1px 2px)"></div>
<svg style="left:24px;top:395px;" width="16" height="16" viewBox="0 0 16 16"><path d="M.8 3.5C.8 2.5 1.5 2 2.5 2H6L7.5 3.5H13C14 3.5 14.5 4 14.5 5V13H.8Z" fill="#f0b840" stroke="#c88a1c" stroke-width=".8"/>
<path d="M2 6H15.5L14.5 14.5H.8Z" fill="#fde08c" stroke="#d09828" stroke-width=".8"/><path d="M2.5 7H14.5" stroke="#fff4c8" stroke-width=".8"/><g transform="translate(1 1)"><path d="M3.5 14.5L4.5 11 11.5 4 13.5 6 6.5 13Z" fill="#f8cc48" stroke="#b8821c" stroke-width=".7"/><path d="M5.5 12.5L12 6" stroke="#fff0b0" stroke-width=".8"/><path d="M11.5 4L13 2.5a1.2 1.2 0 0 1 1.7 0l.3 .3a1.2 1.2 0 0 1 0 1.7L13.5 6Z" fill="#e03028" stroke="#a01810" stroke-width=".6"/><path d="M3.5 14.5L4.1 12.4 5.6 13.9Z" fill="#4a2c10"/></g></svg>
<div class="t" style="left:43px;top:397px;letter-spacing:-0.079px;">Φάκελος Κοστολόγησης</div>
<div style="left:3px;top:690px;width:209px;height:6px;background:linear-gradient(#68aaec 0 1px,#d6e9fc 1px 3px,#9ad5fd 3px 5px,#78a8e2 5px)"></div>
<div style="left:3px;top:696px;width:209px;height:30px;background:linear-gradient(#ffffff 0,#f2f8fe 1px,#dcecfc 6px,#c9e3fb 13px,#c6e1fb 14px,#a2d6fc 14px,#a4d8fc 15px,#b8e4fd 20px,#d6f4ff 28px,#f2fdff 28px);border:1px solid #5c9ce4;border-top:none;border-left-color:#6aa6ec;border-right-color:#6aa6ec"></div>
<svg style="left:14px;top:703px;" width="16" height="16" viewBox="0 0 16 16"><defs><linearGradient id="fo" x1="0" y1="0" x2=".6" y2="1"><stop offset="0" stop-color="#fdeebc"/><stop offset=".35" stop-color="#f6c060"/><stop offset=".75" stop-color="#e69a2c"/><stop offset="1" stop-color="#c47818"/></linearGradient></defs>
<path d="M2 4.5L5.5 2.5 7 3.5 9.5 1.8 11 3 13.5 1 15.5 2.5 14.5 10.5 1.5 15.5Z" fill="#d8943c" stroke="#9c5c18" stroke-width=".8" stroke-linejoin="round"/>
<path d="M3 5L6 3.5M7.5 4L10 2.8M11.5 3.3L13.8 2" stroke="#fbe4b0" stroke-width="1"/>
<path d="M1 5.8L14.8 3.2 14 10.2 1.5 15.2Z" fill="url(#fo)" stroke="#a8641a" stroke-width=".8" stroke-linejoin="round"/>
<path d="M2 6.8L13.8 4.5" stroke="#fff6d8" stroke-width=".9" opacity=".9"/></svg>
<div class="t" style="left:35px;top:705px;letter-spacing:-0.236px;">ΒασικάΑρχεία</div>
<div style="left:3px;top:726px;width:209px;height:30px;background:linear-gradient(#f8fff6 0,#eef9ea 1px,#d8f3d2 6px,#c0edb6 13px,#bcecb2 14px,#84e05e 14px,#88e162 15px,#a4ec76 20px,#bcfa80 28px,#e2ffc6 28px);border:1px solid #4cb030;border-top:none"></div>
<svg style="left:14px;top:733px;" width="16" height="16" viewBox="0 0 16 16"><defs><linearGradient id="fo" x1="0" y1="0" x2=".6" y2="1"><stop offset="0" stop-color="#fdeebc"/><stop offset=".35" stop-color="#f6c060"/><stop offset=".75" stop-color="#e69a2c"/><stop offset="1" stop-color="#c47818"/></linearGradient></defs>
<path d="M2 4.5L5.5 2.5 7 3.5 9.5 1.8 11 3 13.5 1 15.5 2.5 14.5 10.5 1.5 15.5Z" fill="#d8943c" stroke="#9c5c18" stroke-width=".8" stroke-linejoin="round"/>
<path d="M3 5L6 3.5M7.5 4L10 2.8M11.5 3.3L13.8 2" stroke="#fbe4b0" stroke-width="1"/>
<path d="M1 5.8L14.8 3.2 14 10.2 1.5 15.2Z" fill="url(#fo)" stroke="#a8641a" stroke-width=".8" stroke-linejoin="round"/>
<path d="M2 6.8L13.8 4.5" stroke="#fff6d8" stroke-width=".9" opacity=".9"/></svg>
<div class="t" style="left:35px;top:735px;letter-spacing:-0.02px;">Παραστατικά</div>
<div style="left:3px;top:756px;width:209px;height:30px;background:linear-gradient(#ffffff 0,#f2f8fe 1px,#dcecfc 6px,#c9e3fb 13px,#c6e1fb 14px,#a2d6fc 14px,#a4d8fc 15px,#b8e4fd 20px,#d6f4ff 28px,#f2fdff 28px);border:1px solid #5c9ce4;border-top:none;border-left-color:#6aa6ec;border-right-color:#6aa6ec"></div>
<svg style="left:14px;top:763px;" width="16" height="16" viewBox="0 0 16 16"><defs><linearGradient id="fo" x1="0" y1="0" x2=".6" y2="1"><stop offset="0" stop-color="#fdeebc"/><stop offset=".35" stop-color="#f6c060"/><stop offset=".75" stop-color="#e69a2c"/><stop offset="1" stop-color="#c47818"/></linearGradient></defs>
<path d="M2 4.5L5.5 2.5 7 3.5 9.5 1.8 11 3 13.5 1 15.5 2.5 14.5 10.5 1.5 15.5Z" fill="#d8943c" stroke="#9c5c18" stroke-width=".8" stroke-linejoin="round"/>
<path d="M3 5L6 3.5M7.5 4L10 2.8M11.5 3.3L13.8 2" stroke="#fbe4b0" stroke-width="1"/>
<path d="M1 5.8L14.8 3.2 14 10.2 1.5 15.2Z" fill="url(#fo)" stroke="#a8641a" stroke-width=".8" stroke-linejoin="round"/>
<path d="M2 6.8L13.8 4.5" stroke="#fff6d8" stroke-width=".9" opacity=".9"/></svg>
<div class="t" style="left:35px;top:765px;letter-spacing:-0.314px;">Κινήσεις</div>
<div style="left:3px;top:786px;width:209px;height:30px;background:linear-gradient(#ffffff 0,#f2f8fe 1px,#dcecfc 6px,#c9e3fb 13px,#c6e1fb 14px,#a2d6fc 14px,#a4d8fc 15px,#b8e4fd 20px,#d6f4ff 28px,#f2fdff 28px);border:1px solid #5c9ce4;border-top:none;border-left-color:#6aa6ec;border-right-color:#6aa6ec"></div>
<svg style="left:14px;top:793px;" width="16" height="16" viewBox="0 0 16 16"><defs><linearGradient id="fo" x1="0" y1="0" x2=".6" y2="1"><stop offset="0" stop-color="#fdeebc"/><stop offset=".35" stop-color="#f6c060"/><stop offset=".75" stop-color="#e69a2c"/><stop offset="1" stop-color="#c47818"/></linearGradient></defs>
<path d="M2 4.5L5.5 2.5 7 3.5 9.5 1.8 11 3 13.5 1 15.5 2.5 14.5 10.5 1.5 15.5Z" fill="#d8943c" stroke="#9c5c18" stroke-width=".8" stroke-linejoin="round"/>
<path d="M3 5L6 3.5M7.5 4L10 2.8M11.5 3.3L13.8 2" stroke="#fbe4b0" stroke-width="1"/>
<path d="M1 5.8L14.8 3.2 14 10.2 1.5 15.2Z" fill="url(#fo)" stroke="#a8641a" stroke-width=".8" stroke-linejoin="round"/>
<path d="M2 6.8L13.8 4.5" stroke="#fff6d8" stroke-width=".9" opacity=".9"/></svg>
<div class="t" style="left:36px;top:795px;transform:scaleX(0.9311);transform-origin:0 0;">CRM</div>
<div style="left:3px;top:816px;width:209px;height:30px;background:linear-gradient(#ffffff 0,#f2f8fe 1px,#dcecfc 6px,#c9e3fb 13px,#c6e1fb 14px,#a2d6fc 14px,#a4d8fc 15px,#b8e4fd 20px,#d6f4ff 28px,#f2fdff 28px);border:1px solid #5c9ce4;border-top:none;border-left-color:#6aa6ec;border-right-color:#6aa6ec"></div>
<svg style="left:14px;top:823px;" width="16" height="16" viewBox="0 0 16 16"><defs><linearGradient id="fo" x1="0" y1="0" x2=".6" y2="1"><stop offset="0" stop-color="#fdeebc"/><stop offset=".35" stop-color="#f6c060"/><stop offset=".75" stop-color="#e69a2c"/><stop offset="1" stop-color="#c47818"/></linearGradient></defs>
<path d="M2 4.5L5.5 2.5 7 3.5 9.5 1.8 11 3 13.5 1 15.5 2.5 14.5 10.5 1.5 15.5Z" fill="#d8943c" stroke="#9c5c18" stroke-width=".8" stroke-linejoin="round"/>
<path d="M3 5L6 3.5M7.5 4L10 2.8M11.5 3.3L13.8 2" stroke="#fbe4b0" stroke-width="1"/>
<path d="M1 5.8L14.8 3.2 14 10.2 1.5 15.2Z" fill="url(#fo)" stroke="#a8641a" stroke-width=".8" stroke-linejoin="round"/>
<path d="M2 6.8L13.8 4.5" stroke="#fff6d8" stroke-width=".9" opacity=".9"/></svg>
<div class="t" style="left:35px;top:825px;letter-spacing:-0.09px;">Πληροφόριση</div>
<div style="left:3px;top:846px;width:209px;height:30px;background:linear-gradient(#ffffff 0,#f2f8fe 1px,#dcecfc 6px,#c9e3fb 13px,#c6e1fb 14px,#a2d6fc 14px,#a4d8fc 15px,#b8e4fd 20px,#d6f4ff 28px,#f2fdff 28px);border:1px solid #5c9ce4;border-top:none;border-left-color:#6aa6ec;border-right-color:#6aa6ec"></div>
<svg style="left:14px;top:853px;" width="16" height="16" viewBox="0 0 16 16"><defs><linearGradient id="fo" x1="0" y1="0" x2=".6" y2="1"><stop offset="0" stop-color="#fdeebc"/><stop offset=".35" stop-color="#f6c060"/><stop offset=".75" stop-color="#e69a2c"/><stop offset="1" stop-color="#c47818"/></linearGradient></defs>
<path d="M2 4.5L5.5 2.5 7 3.5 9.5 1.8 11 3 13.5 1 15.5 2.5 14.5 10.5 1.5 15.5Z" fill="#d8943c" stroke="#9c5c18" stroke-width=".8" stroke-linejoin="round"/>
<path d="M3 5L6 3.5M7.5 4L10 2.8M11.5 3.3L13.8 2" stroke="#fbe4b0" stroke-width="1"/>
<path d="M1 5.8L14.8 3.2 14 10.2 1.5 15.2Z" fill="url(#fo)" stroke="#a8641a" stroke-width=".8" stroke-linejoin="round"/>
<path d="M2 6.8L13.8 4.5" stroke="#fff6d8" stroke-width=".9" opacity=".9"/></svg>
<div class="t" style="left:35px;top:855px;letter-spacing:0.12px;">Γενική Λογιστική</div>
<div style="left:3px;top:876px;width:209px;height:30px;background:linear-gradient(#ffffff 0,#f2f8fe 1px,#dcecfc 6px,#c9e3fb 13px,#c6e1fb 14px,#a2d6fc 14px,#a4d8fc 15px,#b8e4fd 20px,#d6f4ff 28px,#f2fdff 28px);border:1px solid #5c9ce4;border-top:none;border-left-color:#6aa6ec;border-right-color:#6aa6ec"></div>
<svg style="left:14px;top:883px;" width="16" height="16" viewBox="0 0 16 16"><defs><linearGradient id="fo" x1="0" y1="0" x2=".6" y2="1"><stop offset="0" stop-color="#fdeebc"/><stop offset=".35" stop-color="#f6c060"/><stop offset=".75" stop-color="#e69a2c"/><stop offset="1" stop-color="#c47818"/></linearGradient></defs>
<path d="M2 4.5L5.5 2.5 7 3.5 9.5 1.8 11 3 13.5 1 15.5 2.5 14.5 10.5 1.5 15.5Z" fill="#d8943c" stroke="#9c5c18" stroke-width=".8" stroke-linejoin="round"/>
<path d="M3 5L6 3.5M7.5 4L10 2.8M11.5 3.3L13.8 2" stroke="#fbe4b0" stroke-width="1"/>
<path d="M1 5.8L14.8 3.2 14 10.2 1.5 15.2Z" fill="url(#fo)" stroke="#a8641a" stroke-width=".8" stroke-linejoin="round"/>
<path d="M2 6.8L13.8 4.5" stroke="#fff6d8" stroke-width=".9" opacity=".9"/></svg>
<div class="t" style="left:36px;top:885px;letter-spacing:-0.15px;">Διάφορα</div>
<div style="left:3px;top:906px;width:209px;height:30px;background:linear-gradient(#ffffff 0,#f2f8fe 1px,#dcecfc 6px,#c9e3fb 13px,#c6e1fb 14px,#a2d6fc 14px,#a4d8fc 15px,#b8e4fd 20px,#d6f4ff 28px,#f2fdff 28px);border:1px solid #5c9ce4;border-top:none;border-left-color:#6aa6ec;border-right-color:#6aa6ec"></div>
<svg style="left:14px;top:913px;" width="16" height="16" viewBox="0 0 16 16"><defs><linearGradient id="fo" x1="0" y1="0" x2=".6" y2="1"><stop offset="0" stop-color="#fdeebc"/><stop offset=".35" stop-color="#f6c060"/><stop offset=".75" stop-color="#e69a2c"/><stop offset="1" stop-color="#c47818"/></linearGradient></defs>
<path d="M2 4.5L5.5 2.5 7 3.5 9.5 1.8 11 3 13.5 1 15.5 2.5 14.5 10.5 1.5 15.5Z" fill="#d8943c" stroke="#9c5c18" stroke-width=".8" stroke-linejoin="round"/>
<path d="M3 5L6 3.5M7.5 4L10 2.8M11.5 3.3L13.8 2" stroke="#fbe4b0" stroke-width="1"/>
<path d="M1 5.8L14.8 3.2 14 10.2 1.5 15.2Z" fill="url(#fo)" stroke="#a8641a" stroke-width=".8" stroke-linejoin="round"/>
<path d="M2 6.8L13.8 4.5" stroke="#fff6d8" stroke-width=".9" opacity=".9"/></svg>
<div class="t" style="left:35px;top:915px;letter-spacing:-0.293px;">Παραμετροποίηση</div>
<div style="left:3px;top:936px;width:209px;height:31px;background:linear-gradient(#fff 0 2px,#f2f2f2 2px,#ebebeb 55%,#e0e0e0 28px,#fafafa 28px);border:1px solid #a4a4a4;border-top:none;border-radius:0 0 3px 3px"></div>
<div style="left:190px;top:938px;width:19px;height:26px;background:linear-gradient(#f9f9f9,#eeeeee 50%,#e0e0e0);border:1px solid #9a9a9a;border-radius:3px;box-shadow:inset 0 0 0 1px rgba(255,255,255,.8)"></div>
<svg style="left:195px;top:945px;" width="9" height="11" viewBox="0 0 9 11"><path d="M2.5 1.5l4 4-4 4" stroke="#5e5e5e" stroke-width="1.8" fill="none"/></svg>
<div style="left:0px;top:970px;width:1280px;height:24px;background:linear-gradient(#f5f5f5,#ededed 50%,#e0e0e0);border-top:1px solid #a9a9a9"></div>
<div class="t" style="left:4px;top:976px;letter-spacing:-0.262px;">Χρήστης: Admin</div>
<div style="left:220px;top:149px;width:139px;height:21px;border:1px solid #6aa4e8;border-bottom:none;border-radius:3px 3px 0 0;box-shadow:inset 1px 1px 0 rgba(255,255,255,.85),inset -1px 0 0 rgba(255,255,255,.85);background:linear-gradient(#ffffff 0,#f2f8fe 1px,#dcecfc 4px,#c9e3fb 9px,#c6e1fb 10px,#a2d6fc 10px,#a4d8fc 11px,#b8e4fd 14px,#d6f4ff 19px,#f2fdff 19px)"></div>
<svg style="left:227px;top:151px;" width="18" height="18" viewBox="0 0 18 18"><circle cx="9" cy="9.5" r="6.8" fill="#8a8a8a" stroke="#5a5a5a" stroke-width=".8"/><circle cx="9" cy="9.5" r="5.2" fill="#e8f2fc" stroke="#4a80c8" stroke-width=".8"/>
<path d="M9 6v3.8h3" stroke="#3a5a8a" stroke-width="1.2" fill="none"/><path d="M2.5 4l3-2.5M15.5 4l-3-2.5" stroke="#5a5a5a" stroke-width="1.6"/><path d="M4 16.5l1.5-1.5M14 16.5l-1.5-1.5" stroke="#5a5a5a" stroke-width="1.3"/></svg>
<div class="t" style="left:246px;top:153px;letter-spacing:-0.207px;">Προγραμματισμός</div>
<svg style="left:342px;top:153px;" width="15" height="14" viewBox="0 0 15 14"><defs><linearGradient id="rxg" x1="0" y1="0" x2="0" y2="1"><stop offset="0" stop-color="#f4958c"/><stop offset=".45" stop-color="#ea5c52"/><stop offset=".55" stop-color="#e23a30"/><stop offset="1" stop-color="#ee4034"/></linearGradient></defs>
<rect x=".5" y=".5" width="14" height="13" rx="2.5" fill="url(#rxg)" stroke="#f0a89c"/>
<path d="M4.5 4l6 6M10.5 4l-6 6" stroke="#fff" stroke-width="2.3"/></svg>
<div style="left:359px;top:147px;width:176px;height:23px;border:1px solid #4cb030;border-bottom:none;border-radius:3px 3px 0 0;box-shadow:inset 1px 1px 0 rgba(255,255,255,.85),inset -1px 0 0 rgba(255,255,255,.85);background:linear-gradient(#f8fff6 0,#eef9ea 1px,#d8f3d2 4px,#c0edb6 9px,#bcecb2 10px,#84e05e 10px,#88e162 11px,#a4ec76 15px,#bcfa80 21px,#e2ffc6 21px)"></div>
<svg style="left:368px;top:151px;" width="16" height="16" viewBox="0 0 16 16"><path d="M.8 1.8L3 2.3 5 9.5H13" fill="none" stroke="#9a9a9a" stroke-width="1"/><path d="M3.2 3.2H12.5L12 9H5Z" fill="#ececec" stroke="#c4c4c4" stroke-width=".6"/>
<path d="M14.5 .8C13.5 1 13.4 2 13.4 3V9.8" fill="none" stroke="#3a3a3a" stroke-width="1"/>
<path d="M2.5 12H14" stroke="#1e1e1e" stroke-width="1.3"/><circle cx="3" cy="13" r="1.7" fill="#7a7a7a" stroke="#3a3a3a" stroke-width=".6"/><circle cx="13.5" cy="13" r="1.7" fill="#7a7a7a" stroke="#3a3a3a" stroke-width=".6"/>
<text x="8.2" y="10" font-family="Liberation Sans,sans-serif" font-weight="bold" font-size="12" text-anchor="middle" fill="#22aa22" stroke="#fff" stroke-width="2" stroke-linejoin="round" paint-order="stroke">$</text></svg>
<div class="t" style="left:387px;top:153px;letter-spacing:-0.148px;">Παραστατικά Πωλήσεων</div>
<svg style="left:514px;top:152px;" width="15" height="14" viewBox="0 0 15 14"><defs><linearGradient id="rxg" x1="0" y1="0" x2="0" y2="1"><stop offset="0" stop-color="#f4958c"/><stop offset=".45" stop-color="#ea5c52"/><stop offset=".55" stop-color="#e23a30"/><stop offset="1" stop-color="#ee4034"/></linearGradient></defs>
<rect x=".5" y=".5" width="14" height="13" rx="2.5" fill="url(#rxg)" stroke="#f0a89c"/>
<path d="M4.5 4l6 6M10.5 4l-6 6" stroke="#fff" stroke-width="2.3"/></svg>
<div style="left:1257px;top:150px;width:17px;height:17px;border:1px solid #7ab4f4;border-radius:3px;background:linear-gradient(#f8fcff,#e0f0fe 45%,#aad6fb 52%,#c4e4fd 85%,#e4f3ff);box-shadow:inset 0 0 0 1px rgba(255,255,255,.7)"></div>
<svg style="left:1257px;top:150px;" width="17" height="17" viewBox="0 0 17 17"><path d="M5.3 5.3l6.4 6.4M11.7 5.3l-6.4 6.4" stroke="#1a62d2" stroke-width="2.6"/></svg>
<div style="left:216px;top:170px;width:1059px;height:795px;background:#fff;border:1px solid #bababa;border-radius:2px;box-shadow:1px 1px 3px rgba(0,0,0,.22)"></div>
<div style="left:218px;top:172px;width:1055px;height:791px;background:#fff;border:1px solid #b4b4b4"></div>
<div style="left:220px;top:174px;width:1051px;height:33px;background:linear-gradient(#dcdcdc,#e6e6e6 35%,#f3f3f3 80%,#f7f7f7)"></div>
<div class="t" style="left:225px;top:185px;letter-spacing:-0.061px;color:#8c8c8c;">Σύρετε μία στήλη εδώ για να ομαδοποιήσετε κατά αυτήν τη στήλη</div>
<div style="left:220px;top:207px;width:1051px;height:23px;background:linear-gradient(#fafafa,#f0f0f0 50%,#dedede);border:1px solid #ababab;border-radius:2px 2px 0 0"></div>
<div style="left:236px;top:208px;width:1px;height:21px;background:#b2b2b2"></div>
<div style="left:237px;top:208px;width:1px;height:21px;background:#fcfcfc"></div>
<div style="left:315px;top:208px;width:1px;height:21px;background:#b2b2b2"></div>
<div style="left:316px;top:208px;width:1px;height:21px;background:#fcfcfc"></div>
<div class="t" style="left:240px;top:213px;letter-spacing:-0.075px;">Ημνία</div>
<div style="left:346px;top:208px;width:1px;height:21px;background:#b2b2b2"></div>
<div style="left:347px;top:208px;width:1px;height:21px;background:#fcfcfc"></div>
<div class="t" style="left:320px;top:213px;letter-spacing:2.0px;">..</div>
<div style="left:524px;top:208px;width:1px;height:21px;background:#b2b2b2"></div>
<div style="left:525px;top:208px;width:1px;height:21px;background:#fcfcfc"></div>
<div class="t" style="left:350px;top:213px;letter-spacing:0.03px;">Παραστατικό</div>
<div style="left:669px;top:208px;width:1px;height:21px;background:#b2b2b2"></div>
<div style="left:670px;top:208px;width:1px;height:21px;background:#fcfcfc"></div>
<div class="t" style="left:529px;top:213px;letter-spacing:-0.067px;">Πελάτης</div>
<div style="left:785px;top:208px;width:1px;height:21px;background:#b2b2b2"></div>
<div style="left:786px;top:208px;width:1px;height:21px;background:#fcfcfc"></div>
<div class="t" style="left:675px;top:213px;letter-spacing:-0.083px;">Διεύθυνση Παράδο...</div>
<div style="left:857px;top:208px;width:1px;height:21px;background:#b2b2b2"></div>
<div style="left:858px;top:208px;width:1px;height:21px;background:#fcfcfc"></div>
<div class="t" style="left:790px;top:213px;letter-spacing:-0.13px;">Καθαρή Αξία</div>
<div style="left:929px;top:208px;width:1px;height:21px;background:#b2b2b2"></div>
<div style="left:930px;top:208px;width:1px;height:21px;background:#fcfcfc"></div>
<div class="t" style="left:862px;top:213px;transform:scaleX(0.9524);transform-origin:0 0;">Φπα</div>
<div style="left:1017px;top:208px;width:1px;height:21px;background:#b2b2b2"></div>
<div style="left:1018px;top:208px;width:1px;height:21px;background:#fcfcfc"></div>
<div class="t" style="left:935px;top:213px;letter-spacing:0.1px;">Σύνολο</div>
<div style="left:1059px;top:208px;width:1px;height:21px;background:#b2b2b2"></div>
<div style="left:1060px;top:208px;width:1px;height:21px;background:#fcfcfc"></div>
<div class="t" style="left:1021px;top:213px;letter-spacing:0.9px;">Εκτ...</div>
<div style="left:1098px;top:208px;width:1px;height:21px;background:#b2b2b2"></div>
<div style="left:1099px;top:208px;width:1px;height:21px;background:#fcfcfc"></div>
<div class="t" style="left:1065px;top:213px;letter-spacing:0.8px;">Ακ...</div>
<div style="left:1155px;top:208px;width:1px;height:21px;background:#b2b2b2"></div>
<div style="left:1156px;top:208px;width:1px;height:21px;background:#fcfcfc"></div>
<div class="t" style="left:1103px;top:213px;letter-spacing:0.372px;">Μετασ...</div>
<div style="left:1204px;top:208px;width:1px;height:21px;background:#b2b2b2"></div>
<div style="left:1205px;top:208px;width:1px;height:21px;background:#fcfcfc"></div>
<div class="t" style="left:1161px;top:213px;letter-spacing:0.086px;">Σέ Πα...</div>
<div style="left:1270px;top:208px;width:1px;height:21px;background:#b2b2b2"></div>
<div style="left:1271px;top:208px;width:1px;height:21px;background:#fcfcfc"></div>
<div class="t" style="left:1210px;top:213px;letter-spacing:-0.045px;">Από Παρ...</div>
<svg style="left:334px;top:213px;" width="11" height="10" viewBox="0 0 11 10"><path d="M1.5 8.5l4-7 4 7z" fill="#f4f4f4" stroke="#9a9a9a" stroke-width="1"/></svg>
<div style="left:221px;top:230px;width:15px;height:20px;background:linear-gradient(#fbfbfb,#efefef 50%,#e0e0e0);box-shadow:inset 1px 1px 0 #fff"></div>
<div style="left:221px;top:250px;width:1050px;height:1px;background:#e0e0e0"></div>
<div style="left:220px;top:250px;width:17px;height:1px;background:#ababab"></div>
<div class="t" style="left:240px;top:234px;letter-spacing:0.188px;">18/9/2012</div>
<div class="t" style="left:319px;top:234px;transform:scaleX(0.8748);transform-origin:0 0;">ΑΠΛ</div>
<div class="t" style="left:350px;top:234px;letter-spacing:-0.255px;">ΑΠΛ000000002</div>
<div class="t" style="left:528px;top:234px;letter-spacing:-0.423px;">ΔΗΜΗΤΡΙΟΣ ΑΝΘΡΑΚΟΠΟ...</div>
<div class="t" style="left:673px;top:234px;transform:scaleX(0.8934);transform-origin:0 0;">YPOKATASTHMA</div>
<div class="t" style="left:812px;top:234px;letter-spacing:0.014px;">104,90 €</div>
<div class="t" style="left:890px;top:234px;letter-spacing:-0.008px;">13,63 €</div>
<div class="t" style="left:971px;top:234px;letter-spacing:0.157px;">118,53 €</div>
<svg style="left:1020px;top:232px;" width="17" height="17" viewBox="0 0 17 17"><path d="M2.5 4.5V.5H13L14 1.5V4.5" fill="#eef7fc" stroke="#8c8c8c" stroke-width="1"/><path d="M13.7 1.2V4.5" stroke="#5e5e5e" stroke-width="1"/>
<rect x=".5" y="4.5" width="15" height="7.5" rx="1.5" fill="#fdfdfd" stroke="#868686" stroke-width="1"/>
<path d="M3 6.7h7" stroke="#7a7a7a" stroke-width="1"/><path d="M10.5 6.7h3.5" stroke="#2fc02f" stroke-width="1.2"/>
<circle cx="8.6" cy="11.3" r="4.7" fill="#6f7f86" opacity=".75"/>
<circle cx="9" cy="11" r="4.2" fill="#ee2a26"/><circle cx="9" cy="9.3" r="2.3" fill="#f87470" opacity=".55"/>
<path d="M7.3 9.3l3.4 3.4M10.7 9.3l-3.4 3.4" stroke="#fff" stroke-width="1.3"/></svg>
<svg style="left:1073px;top:234px;" width="12" height="12" viewBox="0 0 12 12"><defs><linearGradient id="ck" x1="0" y1="0" x2="0" y2="1"><stop offset="0" stop-color="#d6eafd"/><stop offset=".5" stop-color="#c4e0fc"/><stop offset=".56" stop-color="#9fd0fa"/><stop offset="1" stop-color="#c2e2fd"/></linearGradient></defs>
<rect x=".5" y=".5" width="11" height="11" rx="1.5" fill="#fff" stroke="#6fa9ee"/>
<rect x="1.7" y="1.7" width="8.6" height="8.6" fill="url(#ck)"/></svg>
<svg style="left:1121px;top:234px;" width="12" height="12" viewBox="0 0 12 12"><defs><linearGradient id="ck" x1="0" y1="0" x2="0" y2="1"><stop offset="0" stop-color="#d6eafd"/><stop offset=".5" stop-color="#c4e0fc"/><stop offset=".56" stop-color="#9fd0fa"/><stop offset="1" stop-color="#c2e2fd"/></linearGradient></defs>
<rect x=".5" y=".5" width="11" height="11" rx="1.5" fill="#fff" stroke="#6fa9ee"/>
<rect x="1.7" y="1.7" width="8.6" height="8.6" fill="url(#ck)"/></svg>
<div style="left:221px;top:251px;width:15px;height:20px;background:linear-gradient(#fbfbfb,#efefef 50%,#e0e0e0);box-shadow:inset 1px 1px 0 #fff"></div>
<div style="left:221px;top:271px;width:1050px;height:1px;background:#e0e0e0"></div>
<div style="left:220px;top:271px;width:17px;height:1px;background:#ababab"></div>
<div class="t" style="left:240px;top:255px;letter-spacing:0.188px;">18/9/2012</div>
<div class="t" style="left:319px;top:255px;transform:scaleX(0.8748);transform-origin:0 0;">ΑΠΛ</div>
<div class="t" style="left:350px;top:255px;letter-spacing:-0.255px;">ΑΠΛ000000001</div>
<div class="t" style="left:528px;top:255px;letter-spacing:-0.423px;">ΔΗΜΗΤΡΙΟΣ ΑΝΘΡΑΚΟΠΟ...</div>
<div class="t" style="left:672px;top:255px;letter-spacing:-0.053px;">ΒΙ ΠΑ  ΩΡΑΙΟΚΑΣΤΡ...</div>
<div class="t" style="left:812px;top:255px;letter-spacing:0.014px;">104,90 €</div>
<div class="t" style="left:890px;top:255px;letter-spacing:-0.008px;">13,63 €</div>
<div class="t" style="left:971px;top:255px;letter-spacing:0.157px;">118,53 €</div>
<svg style="left:1020px;top:253px;" width="17" height="17" viewBox="0 0 17 17"><path d="M2.5 4.5V.5H13L14 1.5V4.5" fill="#eef7fc" stroke="#8c8c8c" stroke-width="1"/><path d="M13.7 1.2V4.5" stroke="#5e5e5e" stroke-width="1"/>
<rect x=".5" y="4.5" width="15" height="7.5" rx="1.5" fill="#fdfdfd" stroke="#868686" stroke-width="1"/>
<path d="M3 6.7h7" stroke="#7a7a7a" stroke-width="1"/><path d="M10.5 6.7h3.5" stroke="#2fc02f" stroke-width="1.2"/>
<circle cx="8.6" cy="11.3" r="4.7" fill="#6f7f86" opacity=".75"/>
<circle cx="9" cy="11" r="4.2" fill="#ee2a26"/><circle cx="9" cy="9.3" r="2.3" fill="#f87470" opacity=".55"/>
<path d="M7.3 9.3l3.4 3.4M10.7 9.3l-3.4 3.4" stroke="#fff" stroke-width="1.3"/></svg>
<svg style="left:1073px;top:255px;" width="12" height="12" viewBox="0 0 12 12"><defs><linearGradient id="ck" x1="0" y1="0" x2="0" y2="1"><stop offset="0" stop-color="#d6eafd"/><stop offset=".5" stop-color="#c4e0fc"/><stop offset=".56" stop-color="#9fd0fa"/><stop offset="1" stop-color="#c2e2fd"/></linearGradient></defs>
<rect x=".5" y=".5" width="11" height="11" rx="1.5" fill="#fff" stroke="#6fa9ee"/>
<rect x="1.7" y="1.7" width="8.6" height="8.6" fill="url(#ck)"/></svg>
<svg style="left:1121px;top:255px;" width="12" height="12" viewBox="0 0 12 12"><defs><linearGradient id="ck" x1="0" y1="0" x2="0" y2="1"><stop offset="0" stop-color="#d6eafd"/><stop offset=".5" stop-color="#c4e0fc"/><stop offset=".56" stop-color="#9fd0fa"/><stop offset="1" stop-color="#c2e2fd"/></linearGradient></defs>
<rect x=".5" y=".5" width="11" height="11" rx="1.5" fill="#fff" stroke="#6fa9ee"/>
<rect x="1.7" y="1.7" width="8.6" height="8.6" fill="url(#ck)"/></svg>
<div style="left:221px;top:272px;width:15px;height:20px;background:linear-gradient(#fbfbfb,#efefef 50%,#e0e0e0);box-shadow:inset 1px 1px 0 #fff"></div>
<div style="left:221px;top:292px;width:1050px;height:1px;background:#e0e0e0"></div>
<div style="left:220px;top:292px;width:17px;height:1px;background:#ababab"></div>
<div class="t" style="left:240px;top:276px;letter-spacing:0.1px;">20/9/2012</div>
<div class="t" style="left:319px;top:276px;transform:scaleX(0.9146);transform-origin:0 0;">ΔΑΠ</div>
<div class="t" style="left:350px;top:276px;letter-spacing:-0.255px;">ΔΑΠ000000001</div>
<div class="t" style="left:984px;top:276px;letter-spacing:-0.24px;">0,00 €</div>
<svg style="left:1020px;top:274px;" width="17" height="17" viewBox="0 0 17 17"><path d="M2.5 4.5V.5H13L14 1.5V4.5" fill="#eef7fc" stroke="#8c8c8c" stroke-width="1"/><path d="M13.7 1.2V4.5" stroke="#5e5e5e" stroke-width="1"/>
<rect x=".5" y="4.5" width="15" height="7.5" rx="1.5" fill="#fdfdfd" stroke="#868686" stroke-width="1"/>
<path d="M3 6.7h7" stroke="#7a7a7a" stroke-width="1"/><path d="M10.5 6.7h3.5" stroke="#2fc02f" stroke-width="1.2"/>
<circle cx="8.6" cy="11.3" r="4.7" fill="#6f7f86" opacity=".75"/>
<circle cx="9" cy="11" r="4.2" fill="#ee2a26"/><circle cx="9" cy="9.3" r="2.3" fill="#f87470" opacity=".55"/>
<path d="M7.3 9.3l3.4 3.4M10.7 9.3l-3.4 3.4" stroke="#fff" stroke-width="1.3"/></svg>
<svg style="left:1073px;top:276px;" width="12" height="12" viewBox="0 0 12 12"><defs><linearGradient id="ck" x1="0" y1="0" x2="0" y2="1"><stop offset="0" stop-color="#d6eafd"/><stop offset=".5" stop-color="#c4e0fc"/><stop offset=".56" stop-color="#9fd0fa"/><stop offset="1" stop-color="#c2e2fd"/></linearGradient></defs>
<rect x=".5" y=".5" width="11" height="11" rx="1.5" fill="#fff" stroke="#6fa9ee"/>
<rect x="1.7" y="1.7" width="8.6" height="8.6" fill="url(#ck)"/></svg>
<svg style="left:1121px;top:276px;" width="12" height="12" viewBox="0 0 12 12"><defs><linearGradient id="ck" x1="0" y1="0" x2="0" y2="1"><stop offset="0" stop-color="#d6eafd"/><stop offset=".5" stop-color="#c4e0fc"/><stop offset=".56" stop-color="#9fd0fa"/><stop offset="1" stop-color="#c2e2fd"/></linearGradient></defs>
<rect x=".5" y=".5" width="11" height="11" rx="1.5" fill="#fff" stroke="#6fa9ee"/>
<rect x="1.7" y="1.7" width="8.6" height="8.6" fill="url(#ck)"/></svg>
<div style="left:221px;top:293px;width:15px;height:20px;background:linear-gradient(#fbfbfb,#efefef 50%,#e0e0e0);box-shadow:inset 1px 1px 0 #fff"></div>
<div style="left:221px;top:313px;width:1050px;height:1px;background:#e0e0e0"></div>
<div style="left:220px;top:313px;width:17px;height:1px;background:#ababab"></div>
<div style="left:237px;top:293px;width:1033px;height:20px;background:#7b96dc"></div>
<div style="left:347px;top:293px;width:177px;height:20px;background:#fff"></div>
<svg style="left:224px;top:298px;" width="9" height="11" viewBox="0 0 9 11"><path d="M2.3 1.5l4.2 4-4.2 4" stroke="#6a6a6a" stroke-width="2.2" fill="none"/></svg>
<div class="t" style="left:240px;top:297px;letter-spacing:0.1px;color:#fff;">25/9/2012</div>
<div class="t" style="left:318px;top:297px;transform:scaleX(0.958);transform-origin:0 0;color:#fff;">ΠΑΡ</div>
<div class="t" style="left:349px;top:297px;letter-spacing:-0.164px;">ΠΑΡ000000001</div>
<div class="t" style="left:984px;top:297px;letter-spacing:-0.24px;color:#fff;">0,00 €</div>
<svg style="left:1020px;top:295px;" width="17" height="17" viewBox="0 0 17 17"><path d="M2.5 4.5V.5H13L14 1.5V4.5" fill="#eef7fc" stroke="#8c8c8c" stroke-width="1"/><path d="M13.7 1.2V4.5" stroke="#5e5e5e" stroke-width="1"/>
<rect x=".5" y="4.5" width="15" height="7.5" rx="1.5" fill="#fdfdfd" stroke="#868686" stroke-width="1"/>
<path d="M3 6.7h7" stroke="#7a7a7a" stroke-width="1"/><path d="M10.5 6.7h3.5" stroke="#2fc02f" stroke-width="1.2"/>
<circle cx="8.6" cy="11.3" r="4.7" fill="#6f7f86" opacity=".75"/>
<circle cx="9" cy="11" r="4.2" fill="#ee2a26"/><circle cx="9" cy="9.3" r="2.3" fill="#f87470" opacity=".55"/>
<path d="M7.3 9.3l3.4 3.4M10.7 9.3l-3.4 3.4" stroke="#fff" stroke-width="1.3"/></svg>
<svg style="left:1073px;top:297px;" width="12" height="12" viewBox="0 0 12 12"><defs><linearGradient id="ck" x1="0" y1="0" x2="0" y2="1"><stop offset="0" stop-color="#d6eafd"/><stop offset=".5" stop-color="#c4e0fc"/><stop offset=".56" stop-color="#9fd0fa"/><stop offset="1" stop-color="#c2e2fd"/></linearGradient></defs>
<rect x=".5" y=".5" width="11" height="11" rx="1.5" fill="#fff" stroke="#6fa9ee"/>
<rect x="1.7" y="1.7" width="8.6" height="8.6" fill="url(#ck)"/></svg>
<svg style="left:1121px;top:297px;" width="12" height="12" viewBox="0 0 12 12"><defs><linearGradient id="ck" x1="0" y1="0" x2="0" y2="1"><stop offset="0" stop-color="#d6eafd"/><stop offset=".5" stop-color="#c4e0fc"/><stop offset=".56" stop-color="#9fd0fa"/><stop offset="1" stop-color="#c2e2fd"/></linearGradient></defs>
<rect x=".5" y=".5" width="11" height="11" rx="1.5" fill="#fff" stroke="#6fa9ee"/>
<rect x="1.7" y="1.7" width="8.6" height="8.6" fill="url(#ck)"/><path d="M2.8 5.8l2.5 2.6 4-4.6" stroke="#1c5ccc" stroke-width="1.9" fill="none"/></svg>
<div class="t" style="left:1159px;top:297px;letter-spacing:0.234px;color:#fff;">ΤΔΑ0...</div>
<div style="left:221px;top:314px;width:15px;height:20px;background:linear-gradient(#fbfbfb,#efefef 50%,#e0e0e0);box-shadow:inset 1px 1px 0 #fff"></div>
<div style="left:221px;top:334px;width:1050px;height:1px;background:#e0e0e0"></div>
<div style="left:220px;top:334px;width:17px;height:1px;background:#ababab"></div>
<div class="t" style="left:240px;top:318px;letter-spacing:0.1px;">20/9/2012</div>
<div class="t" style="left:318px;top:318px;letter-spacing:-0.4px;">ΠΤΔ</div>
<div class="t" style="left:349px;top:318px;letter-spacing:-0.074px;">ΠΤΔ000000001</div>
<div class="t" style="left:984px;top:318px;letter-spacing:-0.24px;">5,00 €</div>
<svg style="left:1020px;top:316px;" width="17" height="17" viewBox="0 0 17 17"><path d="M2.5 4.5V.5H13L14 1.5V4.5" fill="#eef7fc" stroke="#8c8c8c" stroke-width="1"/><path d="M13.7 1.2V4.5" stroke="#5e5e5e" stroke-width="1"/>
<rect x=".5" y="4.5" width="15" height="7.5" rx="1.5" fill="#fdfdfd" stroke="#868686" stroke-width="1"/>
<path d="M3 6.7h7" stroke="#7a7a7a" stroke-width="1"/><path d="M10.5 6.7h3.5" stroke="#2fc02f" stroke-width="1.2"/>
<circle cx="8.6" cy="11.3" r="4.7" fill="#6f7f86" opacity=".75"/>
<circle cx="9" cy="11" r="4.2" fill="#ee2a26"/><circle cx="9" cy="9.3" r="2.3" fill="#f87470" opacity=".55"/>
<path d="M7.3 9.3l3.4 3.4M10.7 9.3l-3.4 3.4" stroke="#fff" stroke-width="1.3"/></svg>
<svg style="left:1073px;top:318px;" width="12" height="12" viewBox="0 0 12 12"><defs><linearGradient id="ck" x1="0" y1="0" x2="0" y2="1"><stop offset="0" stop-color="#d6eafd"/><stop offset=".5" stop-color="#c4e0fc"/><stop offset=".56" stop-color="#9fd0fa"/><stop offset="1" stop-color="#c2e2fd"/></linearGradient></defs>
<rect x=".5" y=".5" width="11" height="11" rx="1.5" fill="#fff" stroke="#6fa9ee"/>
<rect x="1.7" y="1.7" width="8.6" height="8.6" fill="url(#ck)"/></svg>
<svg style="left:1121px;top:318px;" width="12" height="12" viewBox="0 0 12 12"><defs><linearGradient id="ck" x1="0" y1="0" x2="0" y2="1"><stop offset="0" stop-color="#d6eafd"/><stop offset=".5" stop-color="#c4e0fc"/><stop offset=".56" stop-color="#9fd0fa"/><stop offset="1" stop-color="#c2e2fd"/></linearGradient></defs>
<rect x=".5" y=".5" width="11" height="11" rx="1.5" fill="#fff" stroke="#6fa9ee"/>
<rect x="1.7" y="1.7" width="8.6" height="8.6" fill="url(#ck)"/></svg>
<div class="t" style="left:1208px;top:318px;letter-spacing:0.09px;">ΤΔΑ0000...</div>
<div style="left:221px;top:335px;width:15px;height:20px;background:linear-gradient(#fbfbfb,#efefef 50%,#e0e0e0);box-shadow:inset 1px 1px 0 #fff"></div>
<div style="left:221px;top:355px;width:1050px;height:1px;background:#e0e0e0"></div>
<div style="left:220px;top:355px;width:17px;height:1px;background:#ababab"></div>
<div class="t" style="left:240px;top:339px;letter-spacing:0.1px;">20/9/2012</div>
<div class="t" style="left:319px;top:339px;transform:scaleX(0.9581);transform-origin:0 0;">ΤΔΑ</div>
<div class="t" style="left:350px;top:339px;letter-spacing:-0.074px;">ΤΔΑ000000001</div>
<div class="t" style="left:977px;top:339px;letter-spacing:-0.008px;">19,21 €</div>
<svg style="left:1020px;top:337px;" width="17" height="17" viewBox="0 0 17 17"><path d="M2.5 4.5V.5H13L14 1.5V4.5" fill="#eef7fc" stroke="#8c8c8c" stroke-width="1"/><path d="M13.7 1.2V4.5" stroke="#5e5e5e" stroke-width="1"/>
<rect x=".5" y="4.5" width="15" height="7.5" rx="1.5" fill="#fdfdfd" stroke="#868686" stroke-width="1"/>
<path d="M3 6.7h7" stroke="#7a7a7a" stroke-width="1"/><path d="M10.5 6.7h3.5" stroke="#2fc02f" stroke-width="1.2"/>
<circle cx="8.6" cy="11.3" r="4.7" fill="#6f7f86" opacity=".75"/>
<circle cx="9" cy="11" r="4.2" fill="#ee2a26"/><circle cx="9" cy="9.3" r="2.3" fill="#f87470" opacity=".55"/>
<path d="M7.3 9.3l3.4 3.4M10.7 9.3l-3.4 3.4" stroke="#fff" stroke-width="1.3"/></svg>
<svg style="left:1073px;top:339px;" width="12" height="12" viewBox="0 0 12 12"><defs><linearGradient id="ck" x1="0" y1="0" x2="0" y2="1"><stop offset="0" stop-color="#d6eafd"/><stop offset=".5" stop-color="#c4e0fc"/><stop offset=".56" stop-color="#9fd0fa"/><stop offset="1" stop-color="#c2e2fd"/></linearGradient></defs>
<rect x=".5" y=".5" width="11" height="11" rx="1.5" fill="#fff" stroke="#6fa9ee"/>
<rect x="1.7" y="1.7" width="8.6" height="8.6" fill="url(#ck)"/><path d="M2.8 5.8l2.5 2.6 4-4.6" stroke="#1c5ccc" stroke-width="1.9" fill="none"/></svg>
<svg style="left:1121px;top:339px;" width="12" height="12" viewBox="0 0 12 12"><defs><linearGradient id="ck" x1="0" y1="0" x2="0" y2="1"><stop offset="0" stop-color="#d6eafd"/><stop offset=".5" stop-color="#c4e0fc"/><stop offset=".56" stop-color="#9fd0fa"/><stop offset="1" stop-color="#c2e2fd"/></linearGradient></defs>
<rect x=".5" y=".5" width="11" height="11" rx="1.5" fill="#fff" stroke="#6fa9ee"/>
<rect x="1.7" y="1.7" width="8.6" height="8.6" fill="url(#ck)"/></svg>
<div class="t" style="left:1159px;top:339px;letter-spacing:0.185px;">ΑΚ000...</div>
<div style="left:221px;top:356px;width:15px;height:20px;background:linear-gradient(#fbfbfb,#efefef 50%,#e0e0e0);box-shadow:inset 1px 1px 0 #fff"></div>
<div style="left:221px;top:376px;width:1050px;height:1px;background:#e0e0e0"></div>
<div style="left:220px;top:376px;width:17px;height:1px;background:#ababab"></div>
<div class="t" style="left:240px;top:360px;letter-spacing:0.1px;">25/9/2012</div>
<div class="t" style="left:319px;top:360px;transform:scaleX(0.9581);transform-origin:0 0;">ΤΔΑ</div>
<div class="t" style="left:350px;top:360px;letter-spacing:-0.074px;">ΤΔΑ000000002</div>
<div class="t" style="left:963px;top:360px;letter-spacing:-0.094px;">2.200,00 €</div>
<svg style="left:1020px;top:358px;" width="17" height="17" viewBox="0 0 17 17"><path d="M2.5 4.5V.5H13L14 1.5V4.5" fill="#eef7fc" stroke="#8c8c8c" stroke-width="1"/><path d="M13.7 1.2V4.5" stroke="#5e5e5e" stroke-width="1"/>
<rect x=".5" y="4.5" width="15" height="7.5" rx="1.5" fill="#fdfdfd" stroke="#868686" stroke-width="1"/>
<path d="M3 6.7h7" stroke="#7a7a7a" stroke-width="1"/><path d="M10.5 6.7h3.5" stroke="#2fc02f" stroke-width="1.2"/>
<circle cx="8.6" cy="11.3" r="4.7" fill="#6f7f86" opacity=".75"/>
<circle cx="9" cy="11" r="4.2" fill="#ee2a26"/><circle cx="9" cy="9.3" r="2.3" fill="#f87470" opacity=".55"/>
<path d="M7.3 9.3l3.4 3.4M10.7 9.3l-3.4 3.4" stroke="#fff" stroke-width="1.3"/></svg>
<svg style="left:1073px;top:360px;" width="12" height="12" viewBox="0 0 12 12"><defs><linearGradient id="ck" x1="0" y1="0" x2="0" y2="1"><stop offset="0" stop-color="#d6eafd"/><stop offset=".5" stop-color="#c4e0fc"/><stop offset=".56" stop-color="#9fd0fa"/><stop offset="1" stop-color="#c2e2fd"/></linearGradient></defs>
<rect x=".5" y=".5" width="11" height="11" rx="1.5" fill="#fff" stroke="#6fa9ee"/>
<rect x="1.7" y="1.7" width="8.6" height="8.6" fill="url(#ck)"/></svg>
<svg style="left:1121px;top:360px;" width="12" height="12" viewBox="0 0 12 12"><defs><linearGradient id="ck" x1="0" y1="0" x2="0" y2="1"><stop offset="0" stop-color="#d6eafd"/><stop offset=".5" stop-color="#c4e0fc"/><stop offset=".56" stop-color="#9fd0fa"/><stop offset="1" stop-color="#c2e2fd"/></linearGradient></defs>
<rect x=".5" y=".5" width="11" height="11" rx="1.5" fill="#fff" stroke="#6fa9ee"/>
<rect x="1.7" y="1.7" width="8.6" height="8.6" fill="url(#ck)"/></svg>
<div class="t" style="left:1207px;top:360px;letter-spacing:-0.021px;">ΠΑΡ0000...</div>
<div style="left:221px;top:377px;width:15px;height:20px;background:linear-gradient(#fbfbfb,#efefef 50%,#e0e0e0);box-shadow:inset 1px 1px 0 #fff"></div>
<div style="left:221px;top:397px;width:1050px;height:1px;background:#e0e0e0"></div>
<div style="left:220px;top:397px;width:17px;height:1px;background:#ababab"></div>
<div class="t" style="left:240px;top:381px;letter-spacing:0.1px;">20/9/2012</div>
<div class="t" style="left:319px;top:381px;transform:scaleX(0.9581);transform-origin:0 0;">ΤΔΑ</div>
<div class="t" style="left:350px;top:381px;letter-spacing:-0.074px;">ΤΔΑ000000003</div>
<div class="t" style="left:984px;top:381px;letter-spacing:-0.24px;">6,15 €</div>
<svg style="left:1020px;top:379px;" width="17" height="17" viewBox="0 0 17 17"><path d="M2.5 4.5V.5H13L14 1.5V4.5" fill="#eef7fc" stroke="#8c8c8c" stroke-width="1"/><path d="M13.7 1.2V4.5" stroke="#5e5e5e" stroke-width="1"/>
<rect x=".5" y="4.5" width="15" height="7.5" rx="1.5" fill="#fdfdfd" stroke="#868686" stroke-width="1"/>
<path d="M3 6.7h7" stroke="#7a7a7a" stroke-width="1"/><path d="M10.5 6.7h3.5" stroke="#2fc02f" stroke-width="1.2"/>
<circle cx="8.6" cy="11.3" r="4.7" fill="#6f7f86" opacity=".75"/>
<circle cx="9" cy="11" r="4.2" fill="#ee2a26"/><circle cx="9" cy="9.3" r="2.3" fill="#f87470" opacity=".55"/>
<path d="M7.3 9.3l3.4 3.4M10.7 9.3l-3.4 3.4" stroke="#fff" stroke-width="1.3"/></svg>
<svg style="left:1073px;top:381px;" width="12" height="12" viewBox="0 0 12 12"><defs><linearGradient id="ck" x1="0" y1="0" x2="0" y2="1"><stop offset="0" stop-color="#d6eafd"/><stop offset=".5" stop-color="#c4e0fc"/><stop offset=".56" stop-color="#9fd0fa"/><stop offset="1" stop-color="#c2e2fd"/></linearGradient></defs>
<rect x=".5" y=".5" width="11" height="11" rx="1.5" fill="#fff" stroke="#6fa9ee"/>
<rect x="1.7" y="1.7" width="8.6" height="8.6" fill="url(#ck)"/></svg>
<svg style="left:1121px;top:381px;" width="12" height="12" viewBox="0 0 12 12"><defs><linearGradient id="ck" x1="0" y1="0" x2="0" y2="1"><stop offset="0" stop-color="#d6eafd"/><stop offset=".5" stop-color="#c4e0fc"/><stop offset=".56" stop-color="#9fd0fa"/><stop offset="1" stop-color="#c2e2fd"/></linearGradient></defs>
<rect x=".5" y=".5" width="11" height="11" rx="1.5" fill="#fff" stroke="#6fa9ee"/>
<rect x="1.7" y="1.7" width="8.6" height="8.6" fill="url(#ck)"/><path d="M2.8 5.8l2.5 2.6 4-4.6" stroke="#1c5ccc" stroke-width="1.9" fill="none"/></svg>
<div class="t" style="left:1158px;top:381px;letter-spacing:0.4px;">ΠΤΔ0...</div>
<div style="left:221px;top:398px;width:15px;height:20px;background:linear-gradient(#fbfbfb,#efefef 50%,#e0e0e0);box-shadow:inset 1px 1px 0 #fff"></div>
<div style="left:221px;top:418px;width:1050px;height:1px;background:#e0e0e0"></div>
<div style="left:220px;top:418px;width:17px;height:1px;background:#ababab"></div>
<div class="t" style="left:240px;top:402px;letter-spacing:0.1px;">20/9/2012</div>
<div class="t" style="left:319px;top:402px;transform:scaleX(0.9581);transform-origin:0 0;">ΤΔΑ</div>
<div class="t" style="left:350px;top:402px;letter-spacing:-0.074px;">ΑΚ0000000001</div>
<div class="t" style="left:977px;top:402px;letter-spacing:-0.008px;">19,21 €</div>
<svg style="left:1020px;top:400px;" width="17" height="17" viewBox="0 0 17 17"><path d="M2.5 4.5V.5H13L14 1.5V4.5" fill="#eef7fc" stroke="#8c8c8c" stroke-width="1"/><path d="M13.7 1.2V4.5" stroke="#5e5e5e" stroke-width="1"/>
<rect x=".5" y="4.5" width="15" height="7.5" rx="1.5" fill="#fdfdfd" stroke="#868686" stroke-width="1"/>
<path d="M3 6.7h7" stroke="#7a7a7a" stroke-width="1"/><path d="M10.5 6.7h3.5" stroke="#2fc02f" stroke-width="1.2"/>
<circle cx="8.6" cy="11.3" r="4.7" fill="#6f7f86" opacity=".75"/>
<circle cx="9" cy="11" r="4.2" fill="#ee2a26"/><circle cx="9" cy="9.3" r="2.3" fill="#f87470" opacity=".55"/>
<path d="M7.3 9.3l3.4 3.4M10.7 9.3l-3.4 3.4" stroke="#fff" stroke-width="1.3"/></svg>
<svg style="left:1073px;top:402px;" width="12" height="12" viewBox="0 0 12 12"><defs><linearGradient id="ck" x1="0" y1="0" x2="0" y2="1"><stop offset="0" stop-color="#d6eafd"/><stop offset=".5" stop-color="#c4e0fc"/><stop offset=".56" stop-color="#9fd0fa"/><stop offset="1" stop-color="#c2e2fd"/></linearGradient></defs>
<rect x=".5" y=".5" width="11" height="11" rx="1.5" fill="#fff" stroke="#6fa9ee"/>
<rect x="1.7" y="1.7" width="8.6" height="8.6" fill="url(#ck)"/></svg>
<svg style="left:1121px;top:402px;" width="12" height="12" viewBox="0 0 12 12"><defs><linearGradient id="ck" x1="0" y1="0" x2="0" y2="1"><stop offset="0" stop-color="#d6eafd"/><stop offset=".5" stop-color="#c4e0fc"/><stop offset=".56" stop-color="#9fd0fa"/><stop offset="1" stop-color="#c2e2fd"/></linearGradient></defs>
<rect x=".5" y=".5" width="11" height="11" rx="1.5" fill="#fff" stroke="#6fa9ee"/>
<rect x="1.7" y="1.7" width="8.6" height="8.6" fill="url(#ck)"/></svg>
<div class="t" style="left:1208px;top:402px;letter-spacing:0.09px;">ΤΔΑ0000...</div>
<div style="left:221px;top:419px;width:15px;height:20px;background:linear-gradient(#fbfbfb,#efefef 50%,#e0e0e0);box-shadow:inset 1px 1px 0 #fff"></div>
<div style="left:221px;top:439px;width:1050px;height:1px;background:#e0e0e0"></div>
<div style="left:220px;top:439px;width:17px;height:1px;background:#ababab"></div>
<div class="t" style="left:240px;top:423px;letter-spacing:0.1px;">20/9/2012</div>
<div class="t" style="left:319px;top:423px;transform:scaleX(0.9581);transform-origin:0 0;">ΤΔΑ</div>
<div class="t" style="left:350px;top:423px;letter-spacing:-0.073px;">ΤΔΑ000000004</div>
<div class="t" style="left:977px;top:423px;letter-spacing:-0.008px;">34,44 €</div>
<svg style="left:1020px;top:421px;" width="17" height="17" viewBox="0 0 17 17"><path d="M2.5 4.5V.5H13L14 1.5V4.5" fill="#eef7fc" stroke="#8c8c8c" stroke-width="1"/><path d="M13.7 1.2V4.5" stroke="#5e5e5e" stroke-width="1"/>
<rect x=".5" y="4.5" width="15" height="7.5" rx="1.5" fill="#fdfdfd" stroke="#868686" stroke-width="1"/>
<path d="M3 6.7h7" stroke="#7a7a7a" stroke-width="1"/><path d="M10.5 6.7h3.5" stroke="#2fc02f" stroke-width="1.2"/>
<circle cx="8.6" cy="11.3" r="4.7" fill="#6f7f86" opacity=".75"/>
<circle cx="9" cy="11" r="4.2" fill="#ee2a26"/><circle cx="9" cy="9.3" r="2.3" fill="#f87470" opacity=".55"/>
<path d="M7.3 9.3l3.4 3.4M10.7 9.3l-3.4 3.4" stroke="#fff" stroke-width="1.3"/></svg>
<svg style="left:1073px;top:423px;" width="12" height="12" viewBox="0 0 12 12"><defs><linearGradient id="ck" x1="0" y1="0" x2="0" y2="1"><stop offset="0" stop-color="#d6eafd"/><stop offset=".5" stop-color="#c4e0fc"/><stop offset=".56" stop-color="#9fd0fa"/><stop offset="1" stop-color="#c2e2fd"/></linearGradient></defs>
<rect x=".5" y=".5" width="11" height="11" rx="1.5" fill="#fff" stroke="#6fa9ee"/>
<rect x="1.7" y="1.7" width="8.6" height="8.6" fill="url(#ck)"/></svg>
<svg style="left:1121px;top:423px;" width="12" height="12" viewBox="0 0 12 12"><defs><linearGradient id="ck" x1="0" y1="0" x2="0" y2="1"><stop offset="0" stop-color="#d6eafd"/><stop offset=".5" stop-color="#c4e0fc"/><stop offset=".56" stop-color="#9fd0fa"/><stop offset="1" stop-color="#c2e2fd"/></linearGradient></defs>
<rect x=".5" y=".5" width="11" height="11" rx="1.5" fill="#fff" stroke="#6fa9ee"/>
<rect x="1.7" y="1.7" width="8.6" height="8.6" fill="url(#ck)"/></svg>
<div style="left:236px;top:230px;width:1px;height:210px;background:#e0e0e0"></div>
<div style="left:315px;top:230px;width:1px;height:210px;background:#e0e0e0"></div>
<div style="left:346px;top:230px;width:1px;height:210px;background:#e0e0e0"></div>
<div style="left:524px;top:230px;width:1px;height:210px;background:#e0e0e0"></div>
<div style="left:669px;top:230px;width:1px;height:210px;background:#e0e0e0"></div>
<div style="left:785px;top:230px;width:1px;height:210px;background:#e0e0e0"></div>
<div style="left:857px;top:230px;width:1px;height:210px;background:#e0e0e0"></div>
<div style="left:929px;top:230px;width:1px;height:210px;background:#e0e0e0"></div>
<div style="left:1017px;top:230px;width:1px;height:210px;background:#e0e0e0"></div>
<div style="left:1059px;top:230px;width:1px;height:210px;background:#e0e0e0"></div>
<div style="left:1098px;top:230px;width:1px;height:210px;background:#e0e0e0"></div>
<div style="left:1155px;top:230px;width:1px;height:210px;background:#e0e0e0"></div>
<div style="left:1204px;top:230px;width:1px;height:210px;background:#e0e0e0"></div>
<div style="left:1270px;top:230px;width:1px;height:210px;background:#e0e0e0"></div>
<div style="left:236px;top:230px;width:1px;height:210px;background:#ababab"></div>
<div style="left:220px;top:230px;width:1px;height:210px;background:#ababab"></div>
<div style="left:220px;top:937px;width:1051px;height:24px;background:linear-gradient(#f4f4f4,#e8e8e8 60%,#dcdcdc);border:1px solid #a8a8a8"></div>
<div style="left:238px;top:940px;width:77px;height:18px;background:linear-gradient(#f6f6f6,#fafafa);border:1px solid #d0d0d0"></div>
<div class="t" style="left:300px;top:943px;letter-spacing:0.6px;">10</div>
<div style="left:787px;top:940px;width:70px;height:18px;background:linear-gradient(#f6f6f6,#fafafa);border:1px solid #d0d0d0"></div>
<div class="t" style="left:791px;top:943px;letter-spacing:0.52px;">ΑΘΡ.=248...</div>
<div style="left:859px;top:940px;width:70px;height:18px;background:linear-gradient(#f6f6f6,#fafafa);border:1px solid #d0d0d0"></div>
<div class="t" style="left:865px;top:943px;letter-spacing:0.211px;">ΑΘΡ.=39,27</div>
<div style="left:931px;top:940px;width:86px;height:18px;background:linear-gradient(#f6f6f6,#fafafa);border:1px solid #d0d0d0"></div>
<div class="t" style="left:941px;top:943px;letter-spacing:0.118px;">ΑΘΡ.=2521,07</div>
<div style="left:372px;top:270px;width:574px;height:449px;background:#3279e0;border:1px solid #185ac2"></div>
<div style="left:373px;top:271px;width:572px;height:23px;background:linear-gradient(#a4c6f4,#62a0ec 5%,#4c90e8 20%,#2f78de 55%,#2068d4 85%,#2a70da)"></div>
<div style="left:375px;top:294px;width:1px;height:421px;background:#1e64cc"></div>
<div style="left:942px;top:294px;width:1px;height:421px;background:#1e64cc"></div>
<div style="left:375px;top:715px;width:568px;height:1px;background:#1e64cc"></div>
<div style="left:376px;top:294px;width:566px;height:421px;background:#fafafa"></div>
<svg style="left:378px;top:274px;" width="18" height="18" viewBox="0 0 18 18"><text x="1.5" y="13.8" font-family="Liberation Sans,sans-serif" font-style="italic" font-weight="bold" font-size="16.5" fill="#fff" stroke="#0a0a0a" stroke-width="2.2" stroke-linejoin="round" paint-order="stroke">f</text>
<path d="M10 6.7h4.5M10 10.2h4.5" stroke="#0a0a0a" stroke-width="3.4" stroke-linecap="square"/><path d="M10 6.7h4.5M10 10.2h4.5" stroke="#fff" stroke-width="1.5" stroke-linecap="square"/></svg>
<div class="t" style="left:397px;top:276px;letter-spacing:0.044px;font-size:12px;line-height:15px;height:15px;color:#fff;">Expression editor</div>
<svg style="left:925px;top:274px;" width="17" height="17" viewBox="0 0 17 17"><defs><linearGradient id="dx" x1="0" y1="0" x2="0" y2="1"><stop offset="0" stop-color="#f6a096"/><stop offset=".5" stop-color="#ea6258"/><stop offset=".55" stop-color="#e04a40"/><stop offset="1" stop-color="#f03a2a"/></linearGradient></defs>
<rect x=".5" y=".5" width="16" height="16" rx="2" fill="#1c5cc4"/>
<rect x="1" y="1" width="15" height="15" rx="1.5" fill="url(#dx)"/>
<path d="M4.8 4.8l7.4 7.4M12.2 4.8l-7.4 7.4" stroke="#fff" stroke-width="2.2"/></svg>
<div style="left:384px;top:302px;width:550px;height:116px;background:#fff;border:1px solid #a8a8a8"></div>
<div class="t" style="left:388px;top:305px;letter-spacing:0.236px;">[Αποθέτης] =</div>
<div style="left:457px;top:304px;width:1px;height:13px;background:#000"></div>
<div style="left:917px;top:304px;width:15px;height:112px;background:linear-gradient(90deg,#e4e4e4,#fbfbfb 35%,#f6f6f6 65%,#dedede);border:1px solid #d2d2d2;border-radius:3px"></div>
<div style="left:917px;top:304px;width:15px;height:13px;background:linear-gradient(#f6f6f6,#e6e6e6 50%,#d6d6d6);border:1px solid #cdcdcd;border-radius:3px 3px 1px 1px"></div>
<div style="left:917px;top:403px;width:15px;height:13px;background:linear-gradient(#f6f6f6,#e6e6e6 50%,#d6d6d6);border:1px solid #cdcdcd;border-radius:1px 1px 3px 3px"></div>
<svg style="left:919.5px;top:307px;" width="10" height="8" viewBox="0 0 10 8"><path d="M1.5 6l3.5-3.5 3.5 3.5" stroke="#b4b4b4" stroke-width="2" fill="none"/></svg>
<svg style="left:919.5px;top:406px;" width="10" height="8" viewBox="0 0 10 8"><path d="M1.5 2l3.5 3.5 3.5-3.5" stroke="#b4b4b4" stroke-width="2" fill="none"/></svg>
<div style="left:396px;top:426px;width:28px;height:28px;background:linear-gradient(#f6f6f6,#eeeeee);border:1px solid #d0d0d0"></div>
<svg style="left:396px;top:426px;" width="28" height="28" viewBox="0 0 28 28"><path d="M14 5.5v16M6 13.5h16" stroke="#1a1a1a" stroke-width="1.5" fill="none" stroke-width="2"/></svg>
<div style="left:428px;top:426px;width:28px;height:28px;background:linear-gradient(#f6f6f6,#eeeeee);border:1px solid #d0d0d0"></div>
<svg style="left:428px;top:426px;" width="28" height="28" viewBox="0 0 28 28"><path d="M6 13.5h16" stroke="#1a1a1a" stroke-width="1.5" fill="none" stroke-width="2"/></svg>
<div style="left:460px;top:426px;width:28px;height:28px;background:linear-gradient(#f6f6f6,#eeeeee);border:1px solid #d0d0d0"></div>
<svg style="left:460px;top:426px;" width="28" height="28" viewBox="0 0 28 28"><path d="M7.5 6.5l13 14M20.5 6.5l-13 14" stroke="#1a1a1a" stroke-width="1.5" fill="none" stroke-width="1.9"/></svg>
<div style="left:492px;top:426px;width:28px;height:28px;background:linear-gradient(#f6f6f6,#eeeeee);border:1px solid #d0d0d0"></div>
<svg style="left:492px;top:426px;" width="28" height="28" viewBox="0 0 28 28"><path d="M6 13.5h16" stroke="#1a1a1a" stroke-width="1.5" fill="none" stroke-width="1.9"/><circle cx="14" cy="7.5" r="1.7" fill="#1a1a1a"/><circle cx="14" cy="19.7" r="1.7" fill="#1a1a1a"/></svg>
<div style="left:524px;top:426px;width:28px;height:28px;background:linear-gradient(#f6f6f6,#eeeeee);border:1px solid #d0d0d0"></div>
<svg style="left:524px;top:426px;" width="28" height="28" viewBox="0 0 28 28"><text x="14" y="21" text-anchor="middle" font-family="Liberation Sans,sans-serif" font-size="20.5" fill="#1a1a1a" stroke="#1a1a1a" stroke-width=".3" textLength="18.5" lengthAdjust="spacingAndGlyphs">%</text></svg>
<div style="left:573px;top:426px;width:28px;height:28px;background:linear-gradient(#f6f6f6,#eeeeee);border:1px solid #d0d0d0"></div>
<svg style="left:573px;top:426px;" width="28" height="28" viewBox="0 0 28 28"><text x="4" y="20" font-family="Liberation Sans,sans-serif" font-size="19.5" fill="#1a1a1a">(</text><text x="17.8" y="20" font-family="Liberation Sans,sans-serif" font-size="19.5" fill="#1a1a1a">)</text><path d="M10 14.2h1.9M13 14.2h1.9M16 14.2h1.9" stroke="#1a1a1a" stroke-width="1.9"/></svg>
<div style="left:622px;top:426px;width:28px;height:28px;background:linear-gradient(#f6f6f6,#eeeeee);border:1px solid #d0d0d0"></div>
<svg style="left:622px;top:426px;" width="28" height="28" viewBox="0 0 28 28"><path d="M7 11.8h14M7 16.2h14" stroke="#1a1a1a" stroke-width="1.5" fill="none" stroke-width="2"/></svg>
<div style="left:654px;top:426px;width:28px;height:28px;background:linear-gradient(#f6f6f6,#eeeeee);border:1px solid #d0d0d0"></div>
<svg style="left:654px;top:426px;" width="28" height="28" viewBox="0 0 28 28"><path d="M7 11.8h14M7 16.2h14" stroke="#1a1a1a" stroke-width="1.5" fill="none" stroke-width="2"/><path d="M17.5 5.5l-5.5 17" stroke="#1a1a1a" stroke-width="1.5" fill="none" stroke-width="1.9"/></svg>
<div style="left:686px;top:426px;width:28px;height:28px;background:linear-gradient(#f6f6f6,#eeeeee);border:1px solid #d0d0d0"></div>
<svg style="left:686px;top:426px;" width="28" height="28" viewBox="0 0 28 28"><path d="M20.8 8.8l-12.5 5.3 12.5 5.3" stroke="#1a1a1a" stroke-width="1.5" fill="none" stroke-width="2"/></svg>
<div style="left:718px;top:426px;width:28px;height:28px;background:linear-gradient(#f6f6f6,#eeeeee);border:1px solid #d0d0d0"></div>
<svg style="left:718px;top:426px;" width="28" height="28" viewBox="0 0 28 28"><path d="M20 7.8l-11.5 4.7 11.5 4.7M8.5 16.2l11.5 4.7" stroke="#1a1a1a" stroke-width="1.5" fill="none" stroke-width="1.9"/></svg>
<div style="left:750px;top:426px;width:28px;height:28px;background:linear-gradient(#f6f6f6,#eeeeee);border:1px solid #d0d0d0"></div>
<svg style="left:750px;top:426px;" width="28" height="28" viewBox="0 0 28 28"><path d="M8 7.8l11.5 4.7-11.5 4.7M19.5 16.2l-11.5 4.7" stroke="#1a1a1a" stroke-width="1.5" fill="none" stroke-width="1.9"/></svg>
<div style="left:782px;top:426px;width:28px;height:28px;background:linear-gradient(#f6f6f6,#eeeeee);border:1px solid #d0d0d0"></div>
<svg style="left:782px;top:426px;" width="28" height="28" viewBox="0 0 28 28"><path d="M7.2 8.8l12.5 5.3-12.5 5.3" stroke="#1a1a1a" stroke-width="1.5" fill="none" stroke-width="2"/></svg>
<div style="left:831px;top:426px;width:28px;height:28px;background:linear-gradient(#f6f6f6,#eeeeee);border:1px solid #d0d0d0"></div>
<svg style="left:831px;top:426px;" width="28" height="28" viewBox="0 0 28 28"><circle cx="11.2" cy="13.8" r="6" fill="#fff"/><circle cx="16.8" cy="13.8" r="6" fill="#fff"/><path d="M14 8.49a6 6 0 0 1 0 10.62a6 6 0 0 1 0-10.62z" fill="#a2a2a2"/><circle cx="11.2" cy="13.8" r="6" fill="none" stroke="#2c2c2c" stroke-width="1.1"/><circle cx="16.8" cy="13.8" r="6" fill="none" stroke="#2c2c2c" stroke-width="1.1"/></svg>
<div style="left:863px;top:426px;width:28px;height:28px;background:linear-gradient(#f6f6f6,#eeeeee);border:1px solid #d0d0d0"></div>
<svg style="left:863px;top:426px;" width="28" height="28" viewBox="0 0 28 28"><circle cx="11.2" cy="13.8" r="6" fill="#a2a2a2"/><circle cx="16.8" cy="13.8" r="6" fill="#a2a2a2"/><circle cx="11.2" cy="13.8" r="6" fill="none" stroke="#2c2c2c" stroke-width="1.1"/><circle cx="16.8" cy="13.8" r="6" fill="none" stroke="#2c2c2c" stroke-width="1.1"/></svg>
<div style="left:895px;top:426px;width:28px;height:28px;background:linear-gradient(#f6f6f6,#eeeeee);border:1px solid #d0d0d0"></div>
<svg style="left:895px;top:426px;" width="28" height="28" viewBox="0 0 28 28"><circle cx="11.2" cy="13.8" r="6" fill="#a2a2a2"/><circle cx="16.8" cy="13.8" r="6" fill="#fff"/><path d="M14 8.49a6 6 0 0 1 0 10.62a6 6 0 0 1 0-10.62z" fill="#fff"/><circle cx="11.2" cy="13.8" r="6" fill="none" stroke="#2c2c2c" stroke-width="1.1"/><circle cx="16.8" cy="13.8" r="6" fill="none" stroke="#2c2c2c" stroke-width="1.1"/></svg>
<div style="left:563px;top:429px;width:1px;height:23px;background:#c8c8c8"></div>
<div style="left:612px;top:429px;width:1px;height:23px;background:#c8c8c8"></div>
<div style="left:821px;top:429px;width:1px;height:23px;background:#c8c8c8"></div>
<div style="left:384px;top:462px;width:178px;height:194px;background:#fff;border:1px solid #a8a8a8"></div>
<div style="left:385px;top:495px;width:176px;height:16px;background:linear-gradient(#d4f2be,#bdea9b 45%,#a3e176)"></div>
<div class="t" style="left:388px;top:465px;letter-spacing:-0.175px;">Functions</div>
<div class="t" style="left:388px;top:481px;letter-spacing:0.05px;">Operators</div>
<div class="t" style="left:388px;top:497px;letter-spacing:-0.3px;">Fields</div>
<div class="t" style="left:388px;top:513px;letter-spacing:-0.075px;">Constants</div>
<div style="left:570px;top:462px;width:178px;height:194px;background:#fff;border:1px solid #a8a8a8"></div>
<div style="left:571px;top:527px;width:160px;height:16px;background:linear-gradient(#d4f2be,#bdea9b 45%,#a3e176)"></div>
<div class="t" style="left:574px;top:465px;letter-spacing:0.29px;">[Ακυρώθηκε]</div>
<div class="t" style="left:574px;top:481px;letter-spacing:0.09px;">[Αντιστοιχισμένη Αξία]</div>
<div class="t" style="left:574px;top:497px;letter-spacing:-0.282px;">[Αξία ΚΕΠΥΟ]</div>
<div class="t" style="left:574px;top:513px;letter-spacing:-0.101px;">[Από Παραστατικό]</div>
<div class="t" style="left:574px;top:529px;letter-spacing:0.099px;">[Αποθέτης]</div>
<div class="t" style="left:574px;top:545px;letter-spacing:-0.035px;">[Αποθηκευτικός Χώρος]</div>
<div class="t" style="left:574px;top:561px;letter-spacing:-0.095px;">[Διεύθυνση Παράδοσης]</div>
<div class="t" style="left:574px;top:577px;letter-spacing:-0.267px;">[Εισπραξη Κάρτα]</div>
<div class="t" style="left:574px;top:593px;letter-spacing:-0.147px;">[Εισπραξη Μετρητά]</div>
<div class="t" style="left:574px;top:609px;letter-spacing:0.081px;">[Εκτυπώθηκε]</div>
<div class="t" style="left:574px;top:625px;letter-spacing:0.077px;">[Εντατική Λιανική]</div>
<div class="t" style="left:574px;top:641px;letter-spacing:-0.044px;">[Ημνία Δημιουργίας]</div>
<div style="left:731px;top:463px;width:16px;height:192px;background:linear-gradient(90deg,#e6f2fe,#fdfeff 45%,#eef6fe);border-left:1px solid #9cc6f4"></div>
<div style="left:731px;top:463px;width:16px;height:13px;background:linear-gradient(#f4faff,#dcedfe 50%,#c4e0fc);border:1px solid #8cbcf2;border-radius:2px"></div>
<svg style="left:733.5px;top:465px;" width="11" height="9" viewBox="0 0 11 9"><path d="M1.5 6.5l4-4 4 4" stroke="#1c62d0" stroke-width="2.2" fill="none"/></svg>
<div style="left:731px;top:642px;width:16px;height:13px;background:linear-gradient(#f4faff,#dcedfe 50%,#c4e0fc);border:1px solid #8cbcf2;border-radius:2px"></div>
<svg style="left:733.5px;top:644px;" width="11" height="9" viewBox="0 0 11 9"><path d="M1.5 2.5l4 4 4-4" stroke="#1c62d0" stroke-width="2.2" fill="none"/></svg>
<div style="left:731px;top:479px;width:16px;height:58px;background:linear-gradient(90deg,#d4e9fd,#eef7ff 30%,#a9d2f9 60%,#9ccaf6);border:1px solid #7ab0ee;border-radius:3px"></div>
<div style="left:735px;top:505px;width:8px;height:1px;background:#2a70dc"></div>
<div style="left:735px;top:507px;width:8px;height:1px;background:#2a70dc"></div>
<div style="left:735px;top:509px;width:8px;height:1px;background:#2a70dc"></div>
<div style="left:756px;top:462px;width:178px;height:194px;background:#f0f0f0;border:1px solid #4a4a4a"></div>
<div class="t" style="left:760px;top:465px;letter-spacing:-0.018px;">Field Information</div>
<div class="t" style="left:761px;top:478px;letter-spacing:-0.149px;">Caption: Αποθέτης</div>
<div class="t" style="left:761px;top:491px;letter-spacing:0.004px;">The type of this field is:</div>
<div class="t" style="left:760px;top:504px;letter-spacing:-0.135px;">Smart.Module.Αποθέτης</div>
<div style="left:376px;top:664px;width:566px;height:1px;background:#c4c4c4"></div>
<div style="left:773px;top:679px;width:75px;height:24px;border:1px solid #6aa4e8;border-radius:3px;box-shadow:inset 0 0 0 1px rgba(255,255,255,.85);background:linear-gradient(#ffffff 0,#f2f8fe 1px,#dcecfc 4px,#c9e3fb 9px,#c6e1fb 10px,#a2d6fc 10px,#a4d8fc 11px,#b8e4fd 15px,#d6f4ff 21px,#f2fdff 21px)"></div>
<div class="t" style="left:802px;top:685px;transform:scaleX(0.8745);transform-origin:0 0;">OK</div>
<div style="left:854px;top:679px;width:75px;height:24px;border:1px solid #6aa4e8;border-radius:3px;box-shadow:inset 0 0 0 1px rgba(255,255,255,.85);background:linear-gradient(#ffffff 0,#f2f8fe 1px,#dcecfc 4px,#c9e3fb 9px,#c6e1fb 10px,#a2d6fc 10px,#a4d8fc 11px,#b8e4fd 15px,#d6f4ff 21px,#f2fdff 21px)"></div>
<div class="t" style="left:874px;top:685px;letter-spacing:-0.32px;">Cancel</div>
<svg style="left:930px;top:703px;" width="12" height="12" viewBox="0 0 12 12"><path d="M11 1l-10 10M11 5l-6 6M11 9l-2 2" stroke="#b4b4b4" stroke-width="1"/></svg>
</div>
</body></html>
